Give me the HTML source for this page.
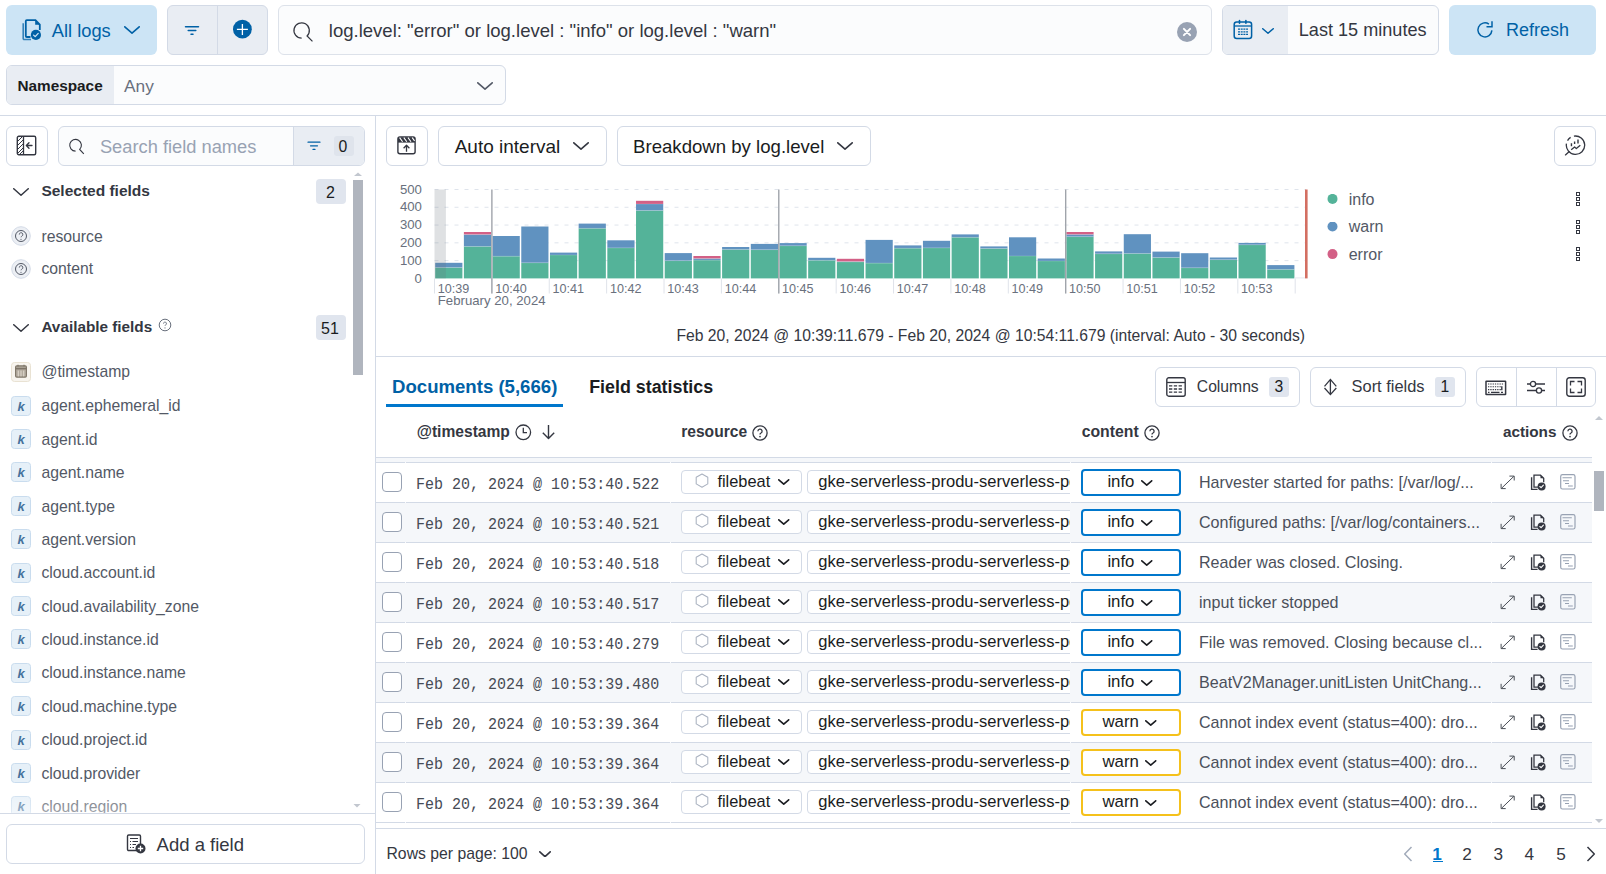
<!DOCTYPE html>
<html><head><meta charset="utf-8">
<style>
*{box-sizing:border-box;margin:0;padding:0}
html,body{width:1606px;height:874px;overflow:hidden;background:#fff;font-family:"Liberation Sans",sans-serif;color:#343741}
.a{position:absolute}
.t{position:absolute;white-space:nowrap;line-height:1}
svg{display:block}
</style></head><body>
<div class="a" style="left:6px;top:5px;width:151px;height:50px;background:#cce4f5;border-radius:6px"></div>
<svg class="a" style="left:20px;top:19px;" width="24" height="22" viewBox="0 0 24 22">
<path d="M3.2 4.2 V19.5 a1 1 0 0 0 1 1 H11" fill="none" stroke="#0061a6" stroke-width="1.6" opacity="0.75"/>
<path d="M10.5 18 H6.8 a1 1 0 0 1 -1 -1 V2.2 a1 1 0 0 1 1 -1 H15.5 L19.8 5.5 V11" fill="none" stroke="#0061a6" stroke-width="1.8"/>
<path d="M15.2 1.5 V5.8 H19.6 Z" fill="#0061a6"/>
<circle cx="15.9" cy="15.9" r="5.1" fill="#0061a6"/>
<path d="M13.6 16.1 L15.2 17.6 L18.2 14.4" fill="none" stroke="#cce4f5" stroke-width="1.3" stroke-linecap="round" stroke-linejoin="round"/>
</svg>
<div class="t" style="left:51.80px;top:22px;font-size:18.3px;color:#0061a6;font-weight:normal;font-family:'Liberation Sans',sans-serif;">All logs</div>
<svg class="a" style="left:124px;top:26px;" width="16" height="8" viewBox="0 0 16 8"><path d="M0.8 0.8 L8.0 7.2 L15.2 0.8" fill="none" stroke="#0061a6" stroke-width="1.6" stroke-linecap="round" stroke-linejoin="round"/></svg>
<div class="a" style="left:167px;top:5px;width:101px;height:50px;background:#e9edf3;border:1px solid #d3dae6;border-radius:6px"></div>
<div class="a" style="left:217px;top:6px;width:1px;height:48px;background:#d3dae6"></div>
<svg class="a" style="left:184px;top:25px;" width="16" height="11" viewBox="0 0 16 11"><path d="M1.5 1.8 H14.5 M4.2 5.5 H11.8 M7 9.3 H9" stroke="#0061a6" stroke-width="1.5" stroke-linecap="round"/></svg>
<svg class="a" style="left:232px;top:19px;" width="21" height="21" viewBox="0 0 21 21"><circle cx="10.4" cy="10.2" r="9.4" fill="#0061a6"/><path d="M10.4 5 V15.9 M4.9 10.4 H15.9" stroke="#fff" stroke-width="1.3"/></svg>
<div class="a" style="left:278px;top:5px;width:934px;height:50px;background:#fbfcfd;border:1px solid #dde2ea;border-radius:6px"></div>
<svg class="a" style="left:291px;top:20px;" width="23" height="23" viewBox="0 0 23 23"><path d="M10.65 18.2 A7.7 7.7 0 1 1 16.09 15.94 L21.45 21.4" fill="none" stroke="#343741" stroke-width="1.25"/></svg>
<div class="t" style="left:328.80px;top:22px;font-size:18.55px;color:#343741;font-weight:normal;font-family:'Liberation Sans',sans-serif;">log.level: "error" or log.level : "info" or log.level : "warn"</div>
<svg class="a" style="left:1177px;top:22px;" width="20" height="20" viewBox="0 0 20 20"><circle cx="10" cy="10" r="10" fill="#98a2b3"/><path d="M6.9 6.9 L13.1 13.1 M13.1 6.9 L6.9 13.1" stroke="#fff" stroke-width="2" stroke-linecap="round"/></svg>
<div class="a" style="left:1222px;top:5px;width:217px;height:50px;background:#fbfcfd;border:1px solid #d3dae6;border-radius:6px;overflow:hidden"><div class="a" style="left:0;top:0;width:65px;height:48px;background:#e9edf3"></div></div>
<svg class="a" style="left:1233px;top:19px;" width="20" height="21" viewBox="0 0 20 21">
<rect x="1.2" y="3" width="17.4" height="16.6" rx="2.5" fill="none" stroke="#0061a6" stroke-width="1.5"/>
<path d="M1.5 7 H18.3" stroke="#0061a6" stroke-width="1.3"/>
<path d="M6.5 1.6 V4.2 M12.9 1.6 V4.2" stroke="#0061a6" stroke-width="1.6" stroke-linecap="round"/>
<path d="M5 10.2 H15 M5 12.8 H15 M5 15.4 H15" stroke="#0061a6" stroke-width="1.2" stroke-dasharray="2 0.7"/>
</svg>
<svg class="a" style="left:1262px;top:28px;" width="12" height="6" viewBox="0 0 12 6"><path d="M0.75 0.75 L6.0 5.25 L11.25 0.75" fill="none" stroke="#0061a6" stroke-width="1.5" stroke-linecap="round" stroke-linejoin="round"/></svg>
<div class="t" style="left:1298.80px;top:21px;font-size:18.1px;color:#343741;font-weight:normal;font-family:'Liberation Sans',sans-serif;">Last 15 minutes</div>
<div class="a" style="left:1449px;top:5px;width:147px;height:50px;background:#cce4f5;border-radius:6px"></div>
<svg class="a" style="left:1476px;top:20px;" width="18" height="19" viewBox="0 0 18 19"><path d="M12.9 4.1 A7 7 0 1 0 15.9 10.4" fill="none" stroke="#0061a6" stroke-width="1.5"/><path d="M16 1.3 V6.7 H10.5" fill="none" stroke="#0061a6" stroke-width="1.5"/></svg>
<div class="t" style="left:1505.90px;top:21px;font-size:18.0px;color:#0061a6;font-weight:normal;font-family:'Liberation Sans',sans-serif;">Refresh</div>
<div class="a" style="left:6px;top:65px;width:500px;height:40px;background:#fbfcfd;border:1px solid #d3dae6;border-radius:6px;overflow:hidden"><div class="a" style="left:0;top:0;width:107px;height:38px;background:#e9edf3"></div></div>
<div class="t" style="left:17.40px;top:78px;font-size:15.35px;color:#1a1c21;font-weight:bold;font-family:'Liberation Sans',sans-serif;">Namespace</div>
<div class="t" style="left:124.00px;top:78px;font-size:17.3px;color:#69707d;font-weight:normal;font-family:'Liberation Sans',sans-serif;">Any</div>
<svg class="a" style="left:477px;top:82px;" width="16" height="8" viewBox="0 0 16 8"><path d="M0.8 0.8 L8.0 7.2 L15.2 0.8" fill="none" stroke="#535966" stroke-width="1.6" stroke-linecap="round" stroke-linejoin="round"/></svg>
<div class="a" style="left:0px;top:115px;width:1606px;height:1px;background:#d3dae6"></div>
<div class="a" style="left:375px;top:116px;width:1px;height:758px;background:#d3dae6"></div>
<div class="a" style="left:376px;top:356px;width:1230px;height:1px;background:#d3dae6"></div>
<div class="a" style="left:6px;top:126px;width:42px;height:40px;background:#fff;border:1px solid #d3dae6;border-radius:6px"></div>
<svg class="a" style="left:16px;top:135px;" width="21" height="21" viewBox="0 0 21 21">
<rect x="1.3" y="1.3" width="18.4" height="18.4" rx="1.5" fill="none" stroke="#343741" stroke-width="1.4"/>
<path d="M7.5 1.5 V19.5" stroke="#343741" stroke-width="1.3"/>
<path d="M2 6 L6 2 M2 10 L7 5 M2 14 L7 9 M2 18 L7 13 M4 19 L7 16" stroke="#343741" stroke-width="1"/>
<path d="M16 10.5 H10.5 M13 7.8 L10.3 10.5 L13 13.2" fill="none" stroke="#343741" stroke-width="1.3" stroke-linecap="round" stroke-linejoin="round"/>
</svg>
<div class="a" style="left:58px;top:126px;width:307px;height:40px;background:#fbfcfd;border:1px solid #d3dae6;border-radius:6px;overflow:hidden"><div class="a" style="left:234px;top:0;width:73px;height:38px;background:#e9edf3;border-left:1px solid #d3dae6"></div></div>
<svg class="a" style="left:66px;top:136px;" width="20" height="20" viewBox="0 0 20 20"><path d="M9.55 15.1 A5.85 5.85 0 1 1 13.69 13.39 L17.8 17.8" fill="none" stroke="#343741" stroke-width="1.1"/></svg>
<div class="t" style="left:99.90px;top:138px;font-size:18.3px;color:#98a2b3;font-weight:normal;font-family:'Liberation Sans',sans-serif;">Search field names</div>
<svg class="a" style="left:307px;top:141px;" width="14" height="10" viewBox="0 0 14 10"><path d="M1 1.2 H13 M3.5 4.8 H10.5 M6 8.4 H8" stroke="#0061a6" stroke-width="1.2" stroke-linecap="round"/></svg>
<div class="a" style="left:334px;top:136px;width:20px;height:20px;background:#dfe4ec;border-radius:3px"></div>
<div class="t" style="left:338.50px;top:139px;font-size:15.8px;color:#1a1c21;font-weight:normal;font-family:'Liberation Sans',sans-serif;">0</div>
<svg class="a" style="left:13px;top:187.5px;" width="16" height="8" viewBox="0 0 16 8"><path d="M0.75 0.75 L8.0 7.25 L15.25 0.75" fill="none" stroke="#343741" stroke-width="1.5" stroke-linecap="round" stroke-linejoin="round"/></svg>
<div class="t" style="left:41.40px;top:183px;font-size:15.5px;color:#343741;font-weight:bold;font-family:'Liberation Sans',sans-serif;">Selected fields</div>
<div class="a" style="left:316px;top:179px;width:30px;height:25px;background:#e0e5ee;border-radius:4px"></div>
<div class="t" style="left:326.00px;top:185px;font-size:16px;color:#1a1c21;font-weight:normal;font-family:'Liberation Sans',sans-serif;">2</div>
<svg class="a" style="left:352px;top:171px;" width="12" height="6" viewBox="0 0 12 6"><path d="M2 5 L6 1.5 L10 5 Z" fill="#c2c7cf"/></svg>
<div class="a" style="left:353px;top:180px;width:10px;height:195px;background:#b0b5be"></div>
<svg class="a" style="left:352px;top:803px;" width="10" height="5" viewBox="0 0 10 5"><path d="M1.5 1 L5 4.5 L8.5 1 Z" fill="#c2c7cf"/></svg>
<svg class="a" style="left:11px;top:226px;" width="20" height="20" viewBox="0 0 20 20"><circle cx="10" cy="10" r="9.3" fill="#eceff4" stroke="#d3dae6" stroke-width="1"/><circle cx="10" cy="10" r="5.5" fill="none" stroke="#535966" stroke-width="1"/><path d="M8.3 8.6 a1.8 1.8 0 1 1 2.6 1.5 c-0.6 0.3 -0.9 0.6 -0.9 1.2" fill="none" stroke="#535966" stroke-width="0.9"/><circle cx="10" cy="13.3" r="0.6" fill="#535966"/></svg>
<div class="t" style="left:41.40px;top:229px;font-size:15.75px;color:#535966;font-weight:normal;font-family:'Liberation Sans',sans-serif;">resource</div>
<svg class="a" style="left:11px;top:259px;" width="20" height="20" viewBox="0 0 20 20"><circle cx="10" cy="10" r="9.3" fill="#eceff4" stroke="#d3dae6" stroke-width="1"/><circle cx="10" cy="10" r="5.5" fill="none" stroke="#535966" stroke-width="1"/><path d="M8.3 8.6 a1.8 1.8 0 1 1 2.6 1.5 c-0.6 0.3 -0.9 0.6 -0.9 1.2" fill="none" stroke="#535966" stroke-width="0.9"/><circle cx="10" cy="13.3" r="0.6" fill="#535966"/></svg>
<div class="t" style="left:41.40px;top:261px;font-size:15.75px;color:#535966;font-weight:normal;font-family:'Liberation Sans',sans-serif;">content</div>
<svg class="a" style="left:13px;top:323.5px;" width="16" height="8" viewBox="0 0 16 8"><path d="M0.75 0.75 L8.0 7.25 L15.25 0.75" fill="none" stroke="#343741" stroke-width="1.5" stroke-linecap="round" stroke-linejoin="round"/></svg>
<div class="t" style="left:41.40px;top:319px;font-size:15.3px;color:#343741;font-weight:bold;font-family:'Liberation Sans',sans-serif;">Available fields</div>
<svg class="a" style="left:158px;top:318px;" width="14" height="14" viewBox="0 0 14 14"><circle cx="7" cy="7" r="5.8" fill="none" stroke="#69707d" stroke-width="1"/><path d="M5.5 5.6 a1.5 1.5 0 1 1 2.2 1.3 c-0.5 0.3 -0.7 0.5 -0.7 1.1" fill="none" stroke="#69707d" stroke-width="0.9"/><circle cx="7" cy="9.9" r="0.55" fill="#69707d"/></svg>
<div class="a" style="left:316px;top:315px;width:30px;height:25px;background:#e0e5ee;border-radius:4px"></div>
<div class="t" style="left:321.00px;top:321px;font-size:16px;color:#1a1c21;font-weight:normal;font-family:'Liberation Sans',sans-serif;">51</div>
<svg class="a" style="left:11px;top:362px;" width="20" height="20" viewBox="0 0 20 20"><rect x="0.5" y="0.5" width="19" height="19" rx="3" fill="#f7f4ee" stroke="#e9e2d3"/>
<rect x="4.6" y="3.9" width="10.8" height="11.2" rx="1.2" fill="#b3ab9f" stroke="#7d7467" stroke-width="1.1"/>
<path d="M4.4 6.6 H15.6" stroke="#7d7467" stroke-width="1.6"/>
<path d="M7.3 8.6 V14.4 M10 8.6 V14.4 M12.7 8.6 V14.4" stroke="#e4ded3" stroke-width="0.9"/>
<path d="M7 2.8 V4.6 M13 2.8 V4.6" stroke="#7d7467" stroke-width="1.1"/></svg>
<div class="t" style="left:41.40px;top:364px;font-size:15.75px;color:#535966;font-weight:normal;font-family:'Liberation Sans',sans-serif;">@timestamp</div>
<svg class="a" style="left:11px;top:396px;" width="20" height="20" viewBox="0 0 20 20"><rect x="0.5" y="0.5" width="19" height="19" rx="3" fill="#e6f0f8" stroke="#c9dcee"/><text x="10" y="14.6" text-anchor="middle" font-family="Liberation Sans" font-weight="bold" font-style="italic" font-size="13" fill="#44709c">k</text></svg>
<div class="t" style="left:41.40px;top:398px;font-size:15.75px;color:#535966;font-weight:normal;font-family:'Liberation Sans',sans-serif;">agent.ephemeral_id</div>
<svg class="a" style="left:11px;top:429px;" width="20" height="20" viewBox="0 0 20 20"><rect x="0.5" y="0.5" width="19" height="19" rx="3" fill="#e6f0f8" stroke="#c9dcee"/><text x="10" y="14.6" text-anchor="middle" font-family="Liberation Sans" font-weight="bold" font-style="italic" font-size="13" fill="#44709c">k</text></svg>
<div class="t" style="left:41.40px;top:432px;font-size:15.75px;color:#535966;font-weight:normal;font-family:'Liberation Sans',sans-serif;">agent.id</div>
<svg class="a" style="left:11px;top:462px;" width="20" height="20" viewBox="0 0 20 20"><rect x="0.5" y="0.5" width="19" height="19" rx="3" fill="#e6f0f8" stroke="#c9dcee"/><text x="10" y="14.6" text-anchor="middle" font-family="Liberation Sans" font-weight="bold" font-style="italic" font-size="13" fill="#44709c">k</text></svg>
<div class="t" style="left:41.40px;top:465px;font-size:15.75px;color:#535966;font-weight:normal;font-family:'Liberation Sans',sans-serif;">agent.name</div>
<svg class="a" style="left:11px;top:496px;" width="20" height="20" viewBox="0 0 20 20"><rect x="0.5" y="0.5" width="19" height="19" rx="3" fill="#e6f0f8" stroke="#c9dcee"/><text x="10" y="14.6" text-anchor="middle" font-family="Liberation Sans" font-weight="bold" font-style="italic" font-size="13" fill="#44709c">k</text></svg>
<div class="t" style="left:41.40px;top:499px;font-size:15.75px;color:#535966;font-weight:normal;font-family:'Liberation Sans',sans-serif;">agent.type</div>
<svg class="a" style="left:11px;top:529px;" width="20" height="20" viewBox="0 0 20 20"><rect x="0.5" y="0.5" width="19" height="19" rx="3" fill="#e6f0f8" stroke="#c9dcee"/><text x="10" y="14.6" text-anchor="middle" font-family="Liberation Sans" font-weight="bold" font-style="italic" font-size="13" fill="#44709c">k</text></svg>
<div class="t" style="left:41.40px;top:532px;font-size:15.75px;color:#535966;font-weight:normal;font-family:'Liberation Sans',sans-serif;">agent.version</div>
<svg class="a" style="left:11px;top:563px;" width="20" height="20" viewBox="0 0 20 20"><rect x="0.5" y="0.5" width="19" height="19" rx="3" fill="#e6f0f8" stroke="#c9dcee"/><text x="10" y="14.6" text-anchor="middle" font-family="Liberation Sans" font-weight="bold" font-style="italic" font-size="13" fill="#44709c">k</text></svg>
<div class="t" style="left:41.40px;top:565px;font-size:15.75px;color:#535966;font-weight:normal;font-family:'Liberation Sans',sans-serif;">cloud.account.id</div>
<svg class="a" style="left:11px;top:596px;" width="20" height="20" viewBox="0 0 20 20"><rect x="0.5" y="0.5" width="19" height="19" rx="3" fill="#e6f0f8" stroke="#c9dcee"/><text x="10" y="14.6" text-anchor="middle" font-family="Liberation Sans" font-weight="bold" font-style="italic" font-size="13" fill="#44709c">k</text></svg>
<div class="t" style="left:41.40px;top:599px;font-size:15.75px;color:#535966;font-weight:normal;font-family:'Liberation Sans',sans-serif;">cloud.availability_zone</div>
<svg class="a" style="left:11px;top:629px;" width="20" height="20" viewBox="0 0 20 20"><rect x="0.5" y="0.5" width="19" height="19" rx="3" fill="#e6f0f8" stroke="#c9dcee"/><text x="10" y="14.6" text-anchor="middle" font-family="Liberation Sans" font-weight="bold" font-style="italic" font-size="13" fill="#44709c">k</text></svg>
<div class="t" style="left:41.40px;top:632px;font-size:15.75px;color:#535966;font-weight:normal;font-family:'Liberation Sans',sans-serif;">cloud.instance.id</div>
<svg class="a" style="left:11px;top:663px;" width="20" height="20" viewBox="0 0 20 20"><rect x="0.5" y="0.5" width="19" height="19" rx="3" fill="#e6f0f8" stroke="#c9dcee"/><text x="10" y="14.6" text-anchor="middle" font-family="Liberation Sans" font-weight="bold" font-style="italic" font-size="13" fill="#44709c">k</text></svg>
<div class="t" style="left:41.40px;top:665px;font-size:15.75px;color:#535966;font-weight:normal;font-family:'Liberation Sans',sans-serif;">cloud.instance.name</div>
<svg class="a" style="left:11px;top:696px;" width="20" height="20" viewBox="0 0 20 20"><rect x="0.5" y="0.5" width="19" height="19" rx="3" fill="#e6f0f8" stroke="#c9dcee"/><text x="10" y="14.6" text-anchor="middle" font-family="Liberation Sans" font-weight="bold" font-style="italic" font-size="13" fill="#44709c">k</text></svg>
<div class="t" style="left:41.40px;top:699px;font-size:15.75px;color:#535966;font-weight:normal;font-family:'Liberation Sans',sans-serif;">cloud.machine.type</div>
<svg class="a" style="left:11px;top:730px;" width="20" height="20" viewBox="0 0 20 20"><rect x="0.5" y="0.5" width="19" height="19" rx="3" fill="#e6f0f8" stroke="#c9dcee"/><text x="10" y="14.6" text-anchor="middle" font-family="Liberation Sans" font-weight="bold" font-style="italic" font-size="13" fill="#44709c">k</text></svg>
<div class="t" style="left:41.40px;top:732px;font-size:15.75px;color:#535966;font-weight:normal;font-family:'Liberation Sans',sans-serif;">cloud.project.id</div>
<svg class="a" style="left:11px;top:763px;" width="20" height="20" viewBox="0 0 20 20"><rect x="0.5" y="0.5" width="19" height="19" rx="3" fill="#e6f0f8" stroke="#c9dcee"/><text x="10" y="14.6" text-anchor="middle" font-family="Liberation Sans" font-weight="bold" font-style="italic" font-size="13" fill="#44709c">k</text></svg>
<div class="t" style="left:41.40px;top:766px;font-size:15.75px;color:#535966;font-weight:normal;font-family:'Liberation Sans',sans-serif;">cloud.provider</div>
<svg class="a" style="left:11px;top:796px;" width="20" height="20" viewBox="0 0 20 20"><rect x="0.5" y="0.5" width="19" height="19" rx="3" fill="#e6f0f8" stroke="#c9dcee"/><text x="10" y="14.6" text-anchor="middle" font-family="Liberation Sans" font-weight="bold" font-style="italic" font-size="13" fill="#44709c">k</text></svg>
<div class="t" style="left:41.40px;top:799px;font-size:15.75px;color:#535966;font-weight:normal;font-family:'Liberation Sans',sans-serif;">cloud.region</div>
<div class="a" style="left:0px;top:783px;width:352px;height:30px;background:linear-gradient(to bottom, rgba(255,255,255,0), rgba(255,255,255,0.45))"></div>
<div class="a" style="left:0px;top:813px;width:375px;height:61px;background:#fff"></div>
<div class="a" style="left:0px;top:813px;width:375px;height:1px;background:#d3dae6"></div>
<div class="a" style="left:6px;top:824px;width:359px;height:40px;background:#fff;border:1px solid #d3dae6;border-radius:6px"></div>
<svg class="a" style="left:126px;top:834px;" width="20" height="20" viewBox="0 0 20 20"><rect x="1.5" y="1" width="13" height="15.5" rx="1.2" fill="none" stroke="#343741" stroke-width="1.4"/>
<path d="M4 4.5 H12 M4 7.5 H5 M6.5 7.5 H12 M4 10.5 H5 M6.5 10.5 H10 M4 13.5 H5 M6.5 13.5 H8" stroke="#343741" stroke-width="1.1"/>
<circle cx="14.5" cy="14.5" r="5" fill="#343741"/>
<path d="M14.5 11.8 V17.2 M11.8 14.5 H17.2" stroke="#fff" stroke-width="1.3"/></svg>
<div class="t" style="left:156.60px;top:836px;font-size:18.5px;color:#343741;font-weight:normal;font-family:'Liberation Sans',sans-serif;">Add a field</div>
<div class="a" style="left:386px;top:126px;width:42px;height:40px;background:#fff;border:1px solid #d3dae6;border-radius:6px"></div>
<svg class="a" style="left:396px;top:135px;" width="21" height="21" viewBox="0 0 21 21"><rect x="1.9" y="1.9" width="17.2" height="16.8" rx="2" fill="none" stroke="#343741" stroke-width="1.4"/>
<path d="M2 2.2 H19 V7.6 H2 Z" fill="#343741"/>
<path d="M3.6 2.6 L6.6 6.8 M7.8 2.6 L10.8 6.8 M12 2.6 L15 6.8 M16.2 2.6 L18.6 5.8" stroke="#fff" stroke-width="1.1"/>
<path d="M10.5 16.7 V10.4 M7.6 13.2 L10.5 10.3 L13.4 13.2" fill="none" stroke="#343741" stroke-width="1.3" stroke-linejoin="round"/></svg>
<div class="a" style="left:438px;top:126px;width:169px;height:40px;background:#fff;border:1px solid #d3dae6;border-radius:6px"></div>
<div class="t" style="left:454.70px;top:137px;font-size:19.0px;color:#1a1c21;font-weight:normal;font-family:'Liberation Sans',sans-serif;">Auto interval</div>
<svg class="a" style="left:573px;top:142px;" width="16" height="8" viewBox="0 0 16 8"><path d="M0.8 0.8 L8.0 7.2 L15.2 0.8" fill="none" stroke="#343741" stroke-width="1.6" stroke-linecap="round" stroke-linejoin="round"/></svg>
<div class="a" style="left:617px;top:126px;width:254px;height:40px;background:#fff;border:1px solid #d3dae6;border-radius:6px"></div>
<div class="t" style="left:633.10px;top:138px;font-size:18.6px;color:#1a1c21;font-weight:normal;font-family:'Liberation Sans',sans-serif;">Breakdown by log.level</div>
<svg class="a" style="left:837px;top:142px;" width="16" height="8" viewBox="0 0 16 8"><path d="M0.8 0.8 L8.0 7.2 L15.2 0.8" fill="none" stroke="#343741" stroke-width="1.6" stroke-linecap="round" stroke-linejoin="round"/></svg>
<div class="a" style="left:1554px;top:126px;width:42px;height:40px;background:#fff;border:1px solid #d3dae6;border-radius:6px"></div>
<svg class="a" style="left:1564px;top:135px;" width="22" height="22" viewBox="0 0 22 22"><path d="M9.9 1.14 A9.2 9.2 0 1 1 2.44 8.6" fill="none" stroke="#343741" stroke-width="1.3"/>
<path d="M3.53 5.6 A9.2 9.2 0 0 1 6.62 2.4" fill="none" stroke="#343741" stroke-width="1.3"/>
<path d="M5 16.7 L1.45 19.9" stroke="#343741" stroke-width="1.3" stroke-linecap="round"/>
<path d="M7.45 8.2 V11.3 M10.6 6.45 V9 M14 4.45 V8.45" stroke="#343741" stroke-width="1.4"/>
<path d="M7.2 14.7 L10.6 11.9 L12.3 13.6 L16.3 10.2" fill="none" stroke="#343741" stroke-width="1.3" stroke-linejoin="round"/></svg>
<svg class="a" style="left:376px;top:170px;" width="1230" height="186" viewBox="0 0 1230 186"><path d="M58.5 90.62 H930" stroke="#dfe4ec" stroke-width="1" stroke-dasharray="4 6"/><path d="M58.5 72.84 H930" stroke="#dfe4ec" stroke-width="1" stroke-dasharray="4 6"/><path d="M58.5 55.06 H930" stroke="#dfe4ec" stroke-width="1" stroke-dasharray="4 6"/><path d="M58.5 37.28 H930" stroke="#dfe4ec" stroke-width="1" stroke-dasharray="4 6"/><path d="M58.5 19.50 H930" stroke="#dfe4ec" stroke-width="1" stroke-dasharray="4 6"/><rect x="59.20" y="97.50" width="27.2" height="10.90" fill="#54b399"/><rect x="59.20" y="92.80" width="27.2" height="4.70" fill="#6092c0"/><rect x="59.20" y="97.10" width="27.2" height="0.8" fill="#fff" opacity="0.22"/><rect x="87.89" y="76.40" width="27.2" height="32.00" fill="#54b399"/><rect x="87.89" y="64.50" width="27.2" height="11.90" fill="#6092c0"/><rect x="87.89" y="76.00" width="27.2" height="0.8" fill="#fff" opacity="0.22"/><rect x="87.89" y="62.00" width="27.2" height="2.50" fill="#d36086"/><rect x="87.89" y="64.10" width="27.2" height="0.8" fill="#fff" opacity="0.22"/><rect x="116.58" y="86.20" width="27.2" height="22.20" fill="#54b399"/><rect x="116.58" y="66.00" width="27.2" height="20.20" fill="#6092c0"/><rect x="116.58" y="85.80" width="27.2" height="0.8" fill="#fff" opacity="0.22"/><rect x="145.27" y="92.80" width="27.2" height="15.60" fill="#54b399"/><rect x="145.27" y="56.50" width="27.2" height="36.30" fill="#6092c0"/><rect x="145.27" y="92.40" width="27.2" height="0.8" fill="#fff" opacity="0.22"/><rect x="173.96" y="85.00" width="27.2" height="23.40" fill="#54b399"/><rect x="173.96" y="82.60" width="27.2" height="2.40" fill="#6092c0"/><rect x="173.96" y="84.60" width="27.2" height="0.8" fill="#fff" opacity="0.22"/><rect x="202.65" y="58.30" width="27.2" height="50.10" fill="#54b399"/><rect x="202.65" y="53.60" width="27.2" height="4.70" fill="#6092c0"/><rect x="202.65" y="57.90" width="27.2" height="0.8" fill="#fff" opacity="0.22"/><rect x="231.34" y="77.90" width="27.2" height="30.50" fill="#54b399"/><rect x="231.34" y="70.30" width="27.2" height="7.60" fill="#6092c0"/><rect x="231.34" y="77.50" width="27.2" height="0.8" fill="#fff" opacity="0.22"/><rect x="260.03" y="40.50" width="27.2" height="67.90" fill="#54b399"/><rect x="260.03" y="34.00" width="27.2" height="6.50" fill="#6092c0"/><rect x="260.03" y="40.10" width="27.2" height="0.8" fill="#fff" opacity="0.22"/><rect x="260.03" y="30.80" width="27.2" height="3.20" fill="#d36086"/><rect x="260.03" y="33.60" width="27.2" height="0.8" fill="#fff" opacity="0.22"/><rect x="288.72" y="90.70" width="27.2" height="17.70" fill="#54b399"/><rect x="288.72" y="83.10" width="27.2" height="7.60" fill="#6092c0"/><rect x="288.72" y="90.30" width="27.2" height="0.8" fill="#fff" opacity="0.22"/><rect x="317.41" y="90.10" width="27.2" height="18.30" fill="#54b399"/><rect x="317.41" y="88.50" width="27.2" height="1.60" fill="#6092c0"/><rect x="317.41" y="89.70" width="27.2" height="0.8" fill="#fff" opacity="0.22"/><rect x="317.41" y="86.00" width="27.2" height="2.50" fill="#d36086"/><rect x="317.41" y="88.10" width="27.2" height="0.8" fill="#fff" opacity="0.22"/><rect x="346.10" y="79.50" width="27.2" height="28.90" fill="#54b399"/><rect x="346.10" y="77.00" width="27.2" height="2.50" fill="#6092c0"/><rect x="346.10" y="79.10" width="27.2" height="0.8" fill="#fff" opacity="0.22"/><rect x="374.79" y="79.70" width="27.2" height="28.70" fill="#54b399"/><rect x="374.79" y="73.90" width="27.2" height="5.80" fill="#6092c0"/><rect x="374.79" y="79.30" width="27.2" height="0.8" fill="#fff" opacity="0.22"/><rect x="403.48" y="75.80" width="27.2" height="32.60" fill="#54b399"/><rect x="403.48" y="73.10" width="27.2" height="2.70" fill="#6092c0"/><rect x="403.48" y="75.40" width="27.2" height="0.8" fill="#fff" opacity="0.22"/><rect x="432.17" y="90.30" width="27.2" height="18.10" fill="#54b399"/><rect x="432.17" y="87.80" width="27.2" height="2.50" fill="#6092c0"/><rect x="432.17" y="89.90" width="27.2" height="0.8" fill="#fff" opacity="0.22"/><rect x="460.86" y="91.90" width="27.2" height="16.50" fill="#54b399"/><rect x="460.86" y="91.50" width="27.2" height="0.40" fill="#6092c0"/><rect x="460.86" y="91.50" width="27.2" height="0.8" fill="#fff" opacity="0.22"/><rect x="460.86" y="88.80" width="27.2" height="2.70" fill="#d36086"/><rect x="460.86" y="91.10" width="27.2" height="0.8" fill="#fff" opacity="0.22"/><rect x="489.55" y="93.10" width="27.2" height="15.30" fill="#54b399"/><rect x="489.55" y="69.90" width="27.2" height="23.20" fill="#6092c0"/><rect x="489.55" y="92.70" width="27.2" height="0.8" fill="#fff" opacity="0.22"/><rect x="518.24" y="78.20" width="27.2" height="30.20" fill="#54b399"/><rect x="518.24" y="75.40" width="27.2" height="2.80" fill="#6092c0"/><rect x="518.24" y="77.80" width="27.2" height="0.8" fill="#fff" opacity="0.22"/><rect x="546.93" y="77.90" width="27.2" height="30.50" fill="#54b399"/><rect x="546.93" y="70.80" width="27.2" height="7.10" fill="#6092c0"/><rect x="546.93" y="77.50" width="27.2" height="0.8" fill="#fff" opacity="0.22"/><rect x="575.62" y="67.30" width="27.2" height="41.10" fill="#54b399"/><rect x="575.62" y="64.40" width="27.2" height="2.90" fill="#6092c0"/><rect x="575.62" y="66.90" width="27.2" height="0.8" fill="#fff" opacity="0.22"/><rect x="604.31" y="78.50" width="27.2" height="29.90" fill="#54b399"/><rect x="604.31" y="76.40" width="27.2" height="2.10" fill="#6092c0"/><rect x="604.31" y="78.10" width="27.2" height="0.8" fill="#fff" opacity="0.22"/><rect x="633.00" y="86.00" width="27.2" height="22.40" fill="#54b399"/><rect x="633.00" y="67.30" width="27.2" height="18.70" fill="#6092c0"/><rect x="633.00" y="85.60" width="27.2" height="0.8" fill="#fff" opacity="0.22"/><rect x="661.69" y="91.00" width="27.2" height="17.40" fill="#54b399"/><rect x="661.69" y="88.50" width="27.2" height="2.50" fill="#6092c0"/><rect x="661.69" y="90.60" width="27.2" height="0.8" fill="#fff" opacity="0.22"/><rect x="690.38" y="66.70" width="27.2" height="41.70" fill="#54b399"/><rect x="690.38" y="64.40" width="27.2" height="2.30" fill="#6092c0"/><rect x="690.38" y="66.30" width="27.2" height="0.8" fill="#fff" opacity="0.22"/><rect x="690.38" y="62.00" width="27.2" height="2.40" fill="#d36086"/><rect x="690.38" y="64.00" width="27.2" height="0.8" fill="#fff" opacity="0.22"/><rect x="719.07" y="83.80" width="27.2" height="24.60" fill="#54b399"/><rect x="719.07" y="81.40" width="27.2" height="2.40" fill="#6092c0"/><rect x="719.07" y="83.40" width="27.2" height="0.8" fill="#fff" opacity="0.22"/><rect x="747.76" y="83.50" width="27.2" height="24.90" fill="#54b399"/><rect x="747.76" y="64.20" width="27.2" height="19.30" fill="#6092c0"/><rect x="747.76" y="83.10" width="27.2" height="0.8" fill="#fff" opacity="0.22"/><rect x="776.45" y="87.50" width="27.2" height="20.90" fill="#54b399"/><rect x="776.45" y="81.60" width="27.2" height="5.90" fill="#6092c0"/><rect x="776.45" y="87.10" width="27.2" height="0.8" fill="#fff" opacity="0.22"/><rect x="805.14" y="97.80" width="27.2" height="10.60" fill="#54b399"/><rect x="805.14" y="83.20" width="27.2" height="14.60" fill="#6092c0"/><rect x="805.14" y="97.40" width="27.2" height="0.8" fill="#fff" opacity="0.22"/><rect x="833.83" y="89.70" width="27.2" height="18.70" fill="#54b399"/><rect x="833.83" y="87.50" width="27.2" height="2.20" fill="#6092c0"/><rect x="833.83" y="89.30" width="27.2" height="0.8" fill="#fff" opacity="0.22"/><rect x="862.52" y="74.80" width="27.2" height="33.60" fill="#54b399"/><rect x="862.52" y="72.90" width="27.2" height="1.90" fill="#6092c0"/><rect x="862.52" y="74.40" width="27.2" height="0.8" fill="#fff" opacity="0.22"/><rect x="891.21" y="99.40" width="27.2" height="9.00" fill="#54b399"/><rect x="891.21" y="95.10" width="27.2" height="4.30" fill="#6092c0"/><rect x="891.21" y="99.00" width="27.2" height="0.8" fill="#fff" opacity="0.22"/><rect x="58.5" y="19.5" width="11.4" height="88.89999999999998" fill="#69707d" opacity="0.21"/><path d="M58.50 108.39999999999998 V123.5" stroke="#dfe3ea" stroke-width="1"/><path d="M115.88 108.39999999999998 V123.5" stroke="#dfe3ea" stroke-width="1"/><path d="M173.26 108.39999999999998 V123.5" stroke="#dfe3ea" stroke-width="1"/><path d="M230.64 108.39999999999998 V123.5" stroke="#dfe3ea" stroke-width="1"/><path d="M288.02 108.39999999999998 V123.5" stroke="#dfe3ea" stroke-width="1"/><path d="M345.40 108.39999999999998 V123.5" stroke="#dfe3ea" stroke-width="1"/><path d="M402.78 108.39999999999998 V123.5" stroke="#dfe3ea" stroke-width="1"/><path d="M460.16 108.39999999999998 V123.5" stroke="#dfe3ea" stroke-width="1"/><path d="M517.54 108.39999999999998 V123.5" stroke="#dfe3ea" stroke-width="1"/><path d="M574.92 108.39999999999998 V123.5" stroke="#dfe3ea" stroke-width="1"/><path d="M632.30 108.39999999999998 V123.5" stroke="#dfe3ea" stroke-width="1"/><path d="M689.68 108.39999999999998 V123.5" stroke="#dfe3ea" stroke-width="1"/><path d="M747.06 108.39999999999998 V123.5" stroke="#dfe3ea" stroke-width="1"/><path d="M804.44 108.39999999999998 V123.5" stroke="#dfe3ea" stroke-width="1"/><path d="M861.82 108.39999999999998 V123.5" stroke="#dfe3ea" stroke-width="1"/><path d="M919.20 108.39999999999998 V123.5" stroke="#dfe3ea" stroke-width="1"/><path d="M115.88 19.5 V123.5" stroke="#a0a4ab" stroke-width="1.4"/><path d="M402.78 19.5 V123.5" stroke="#a0a4ab" stroke-width="1.4"/><path d="M689.68 19.5 V123.5" stroke="#a0a4ab" stroke-width="1.4"/><path d="M918.5999999999999 107.89999999999998 H929" stroke="#e6e9ee" stroke-width="1"/><rect x="929" y="19.5" width="2.6" height="88.89999999999998" fill="#d36f62"/></svg>
<div class="t" style="left:399.88px;top:183px;font-size:13.2px;color:#69707d;font-weight:normal;font-family:'Liberation Sans',sans-serif;">500</div>
<div class="t" style="left:399.88px;top:200px;font-size:13.2px;color:#69707d;font-weight:normal;font-family:'Liberation Sans',sans-serif;">400</div>
<div class="t" style="left:399.88px;top:218px;font-size:13.2px;color:#69707d;font-weight:normal;font-family:'Liberation Sans',sans-serif;">300</div>
<div class="t" style="left:399.88px;top:236px;font-size:13.2px;color:#69707d;font-weight:normal;font-family:'Liberation Sans',sans-serif;">200</div>
<div class="t" style="left:399.88px;top:254px;font-size:13.2px;color:#69707d;font-weight:normal;font-family:'Liberation Sans',sans-serif;">100</div>
<div class="t" style="left:414.56px;top:272px;font-size:13.2px;color:#69707d;font-weight:normal;font-family:'Liberation Sans',sans-serif;">0</div>
<div class="t" style="left:437.80px;top:283px;font-size:12.6px;color:#69707d;font-weight:normal;font-family:'Liberation Sans',sans-serif;">10:39</div>
<div class="t" style="left:495.18px;top:283px;font-size:12.6px;color:#69707d;font-weight:normal;font-family:'Liberation Sans',sans-serif;">10:40</div>
<div class="t" style="left:552.56px;top:283px;font-size:12.6px;color:#69707d;font-weight:normal;font-family:'Liberation Sans',sans-serif;">10:41</div>
<div class="t" style="left:609.94px;top:283px;font-size:12.6px;color:#69707d;font-weight:normal;font-family:'Liberation Sans',sans-serif;">10:42</div>
<div class="t" style="left:667.32px;top:283px;font-size:12.6px;color:#69707d;font-weight:normal;font-family:'Liberation Sans',sans-serif;">10:43</div>
<div class="t" style="left:724.70px;top:283px;font-size:12.6px;color:#69707d;font-weight:normal;font-family:'Liberation Sans',sans-serif;">10:44</div>
<div class="t" style="left:782.08px;top:283px;font-size:12.6px;color:#69707d;font-weight:normal;font-family:'Liberation Sans',sans-serif;">10:45</div>
<div class="t" style="left:839.46px;top:283px;font-size:12.6px;color:#69707d;font-weight:normal;font-family:'Liberation Sans',sans-serif;">10:46</div>
<div class="t" style="left:896.84px;top:283px;font-size:12.6px;color:#69707d;font-weight:normal;font-family:'Liberation Sans',sans-serif;">10:47</div>
<div class="t" style="left:954.22px;top:283px;font-size:12.6px;color:#69707d;font-weight:normal;font-family:'Liberation Sans',sans-serif;">10:48</div>
<div class="t" style="left:1011.60px;top:283px;font-size:12.6px;color:#69707d;font-weight:normal;font-family:'Liberation Sans',sans-serif;">10:49</div>
<div class="t" style="left:1068.98px;top:283px;font-size:12.6px;color:#69707d;font-weight:normal;font-family:'Liberation Sans',sans-serif;">10:50</div>
<div class="t" style="left:1126.36px;top:283px;font-size:12.6px;color:#69707d;font-weight:normal;font-family:'Liberation Sans',sans-serif;">10:51</div>
<div class="t" style="left:1183.74px;top:283px;font-size:12.6px;color:#69707d;font-weight:normal;font-family:'Liberation Sans',sans-serif;">10:52</div>
<div class="t" style="left:1241.12px;top:283px;font-size:12.6px;color:#69707d;font-weight:normal;font-family:'Liberation Sans',sans-serif;">10:53</div>
<div class="t" style="left:437.80px;top:294px;font-size:13.2px;color:#69707d;font-weight:normal;font-family:'Liberation Sans',sans-serif;">February 20, 2024</div>
<svg class="a" style="left:1327px;top:194px;" width="11" height="11" viewBox="0 0 11 11"><circle cx="5.5" cy="4.90" r="5" fill="#54b399"/></svg>
<div class="t" style="left:1348.70px;top:192px;font-size:16px;color:#535966;font-weight:normal;font-family:'Liberation Sans',sans-serif;">info</div>
<svg class="a" style="left:1575px;top:191px;" width="7" height="16" viewBox="0 0 7 16"><rect x="1.5" y="1.5" width="3" height="3" fill="none" stroke="#343741" stroke-width="1"/><rect x="1.5" y="6.5" width="3" height="3" fill="none" stroke="#343741" stroke-width="1"/><rect x="1.5" y="11.5" width="3" height="3" fill="none" stroke="#343741" stroke-width="1"/></svg>
<svg class="a" style="left:1327px;top:222px;" width="11" height="11" viewBox="0 0 11 11"><circle cx="5.5" cy="4.50" r="5" fill="#6092c0"/></svg>
<div class="t" style="left:1348.70px;top:219px;font-size:16px;color:#535966;font-weight:normal;font-family:'Liberation Sans',sans-serif;">warn</div>
<svg class="a" style="left:1575px;top:219px;" width="7" height="16" viewBox="0 0 7 16"><rect x="1.5" y="1.5" width="3" height="3" fill="none" stroke="#343741" stroke-width="1"/><rect x="1.5" y="6.5" width="3" height="3" fill="none" stroke="#343741" stroke-width="1"/><rect x="1.5" y="11.5" width="3" height="3" fill="none" stroke="#343741" stroke-width="1"/></svg>
<svg class="a" style="left:1327px;top:249px;" width="11" height="11" viewBox="0 0 11 11"><circle cx="5.5" cy="5.10" r="5" fill="#d36086"/></svg>
<div class="t" style="left:1348.70px;top:247px;font-size:16px;color:#535966;font-weight:normal;font-family:'Liberation Sans',sans-serif;">error</div>
<svg class="a" style="left:1575px;top:246px;" width="7" height="16" viewBox="0 0 7 16"><rect x="1.5" y="1.5" width="3" height="3" fill="none" stroke="#343741" stroke-width="1"/><rect x="1.5" y="6.5" width="3" height="3" fill="none" stroke="#343741" stroke-width="1"/><rect x="1.5" y="11.5" width="3" height="3" fill="none" stroke="#343741" stroke-width="1"/></svg>
<div class="t" style="left:676.40px;top:328px;font-size:15.7px;color:#343741;font-weight:normal;font-family:'Liberation Sans',sans-serif;">Feb 20, 2024 @ 10:39:11.679 - Feb 20, 2024 @ 10:54:11.679 (interval: Auto - 30 seconds)</div>
<div class="t" style="left:392.00px;top:378px;font-size:18.6px;color:#0061a6;font-weight:bold;font-family:'Liberation Sans',sans-serif;">Documents (5,666)</div>
<div class="a" style="left:386px;top:404px;width:177px;height:3px;background:#0077cc"></div>
<div class="t" style="left:589.20px;top:379px;font-size:17.85px;color:#1a1c21;font-weight:bold;font-family:'Liberation Sans',sans-serif;">Field statistics</div>
<div class="a" style="left:1155px;top:367px;width:145px;height:40px;background:#fff;border:1px solid #d3dae6;border-radius:6px"></div>
<svg class="a" style="left:1166px;top:377px;" width="20" height="20" viewBox="0 0 20 20"><rect x="0.8" y="0.8" width="18.4" height="18.4" rx="2" fill="none" stroke="#343741" stroke-width="1.4"/>
<path d="M1 5.5 H19" stroke="#343741" stroke-width="1.3"/>
<path d="M3 8.8 H17 M3 12 H17 M3 15.2 H17" stroke="#343741" stroke-width="1.3" stroke-dasharray="3.3 1.5"/></svg>
<div class="t" style="left:1196.80px;top:379px;font-size:15.7px;color:#343741;font-weight:normal;font-family:'Liberation Sans',sans-serif;">Columns</div>
<div class="a" style="left:1269px;top:377px;width:20px;height:20px;background:#e0e5ee;border-radius:3px"></div>
<div class="t" style="left:1274.50px;top:379px;font-size:15.7px;color:#1a1c21;font-weight:normal;font-family:'Liberation Sans',sans-serif;">3</div>
<div class="a" style="left:1310px;top:367px;width:156px;height:40px;background:#fff;border:1px solid #d3dae6;border-radius:6px"></div>
<svg class="a" style="left:1323px;top:376px;" width="15" height="22" viewBox="0 0 15 22"><path d="M7.4 3.6 V18.2 M1.5 10.4 L7.4 3.4 L13.3 10.4 M1.5 12 L7.4 18.6 L13.3 12" fill="none" stroke="#343741" stroke-width="1.3" stroke-linejoin="miter"/></svg>
<div class="t" style="left:1351.60px;top:378px;font-size:16.4px;color:#343741;font-weight:normal;font-family:'Liberation Sans',sans-serif;">Sort fields</div>
<div class="a" style="left:1435px;top:377px;width:20px;height:20px;background:#e0e5ee;border-radius:3px"></div>
<div class="t" style="left:1440.50px;top:379px;font-size:15.7px;color:#1a1c21;font-weight:normal;font-family:'Liberation Sans',sans-serif;">1</div>
<div class="a" style="left:1476px;top:367px;width:120px;height:40px;background:#fff;border:1px solid #d3dae6;border-radius:6px"></div>
<div class="a" style="left:1516px;top:368px;width:1px;height:38px;background:#d3dae6"></div>
<div class="a" style="left:1556px;top:368px;width:1px;height:38px;background:#d3dae6"></div>
<svg class="a" style="left:1485px;top:380px;" width="22" height="16" viewBox="0 0 22 16"><rect x="1" y="1.2" width="19.6" height="13.4" rx="0.4" fill="none" stroke="#343741" stroke-width="1.5"/>
<path d="M3 4 H18.5 M3 6.8 H16 M3 9.6 H16" stroke="#343741" stroke-width="1.1" stroke-dasharray="1.3 1"/>
<path d="M16.8 6.2 V10.2" stroke="#343741" stroke-width="1.4"/>
<path d="M6 12.4 H14.5 M3 12.4 H4.5 M16 12.4 H18" stroke="#343741" stroke-width="1.1"/></svg>
<svg class="a" style="left:1526px;top:378px;" width="20" height="18" viewBox="0 0 20 18"><path d="M1 6 H19 M1 12.5 H19" stroke="#343741" stroke-width="1.3"/>
<circle cx="7" cy="6" r="2.6" fill="#fff" stroke="#343741" stroke-width="1.3"/>
<circle cx="13" cy="12.5" r="2.6" fill="#fff" stroke="#343741" stroke-width="1.3"/></svg>
<svg class="a" style="left:1566px;top:377px;" width="20" height="20" viewBox="0 0 20 20"><rect x="0.8" y="0.8" width="18.4" height="18.4" rx="2.5" fill="none" stroke="#343741" stroke-width="1.4"/>
<path d="M4.5 8.5 V4.5 H8.5 M11.5 4.5 H15.5 V8.5 M15.5 11.5 V15.5 H11.5 M8.5 15.5 H4.5 V11.5" fill="none" stroke="#343741" stroke-width="1.3"/></svg>
<div class="t" style="left:416.70px;top:424px;font-size:15.6px;color:#343741;font-weight:bold;font-family:'Liberation Sans',sans-serif;">@timestamp</div>
<svg class="a" style="left:515px;top:424px;" width="17" height="17" viewBox="0 0 17 17"><circle cx="8.3" cy="8.3" r="7.3" fill="none" stroke="#343741" stroke-width="1.3"/><path d="M8.3 3.8 V8.6 H12" fill="none" stroke="#343741" stroke-width="1.3"/></svg>
<svg class="a" style="left:541px;top:424px;" width="15" height="16" viewBox="0 0 15 16"><path d="M7.5 1 V14.5 M1.8 8.8 L7.5 14.5 L13.2 8.8" fill="none" stroke="#343741" stroke-width="1.4" stroke-linejoin="round"/></svg>
<div class="t" style="left:681.20px;top:424px;font-size:15.6px;color:#343741;font-weight:bold;font-family:'Liberation Sans',sans-serif;">resource</div>
<svg class="a" style="left:752px;top:425px;" width="16" height="16" viewBox="0 0 16 16"><circle cx="8" cy="8" r="7.1" fill="none" stroke="#343741" stroke-width="1.3"/><path d="M5.9 6.2 a2.1 2.1 0 1 1 3.1 1.8 c-0.7 0.35 -1 0.75 -1 1.5" fill="none" stroke="#343741" stroke-width="1.3"/><circle cx="8" cy="11.6" r="0.85" fill="#343741"/></svg>
<div class="t" style="left:1081.70px;top:424px;font-size:15.8px;color:#343741;font-weight:bold;font-family:'Liberation Sans',sans-serif;">content</div>
<svg class="a" style="left:1144px;top:425px;" width="16" height="16" viewBox="0 0 16 16"><circle cx="8" cy="8" r="7.1" fill="none" stroke="#343741" stroke-width="1.3"/><path d="M5.9 6.2 a2.1 2.1 0 1 1 3.1 1.8 c-0.7 0.35 -1 0.75 -1 1.5" fill="none" stroke="#343741" stroke-width="1.3"/><circle cx="8" cy="11.6" r="0.85" fill="#343741"/></svg>
<div class="t" style="left:1502.90px;top:424px;font-size:15.3px;color:#343741;font-weight:bold;font-family:'Liberation Sans',sans-serif;">actions</div>
<svg class="a" style="left:1562px;top:425px;" width="16" height="16" viewBox="0 0 16 16"><circle cx="8" cy="8" r="7.1" fill="none" stroke="#343741" stroke-width="1.3"/><path d="M5.9 6.2 a2.1 2.1 0 1 1 3.1 1.8 c-0.7 0.35 -1 0.75 -1 1.5" fill="none" stroke="#343741" stroke-width="1.3"/><circle cx="8" cy="11.6" r="0.85" fill="#343741"/></svg>
<svg class="a" style="left:1594px;top:415px;" width="10" height="6" viewBox="0 0 10 6"><path d="M1 5 L5 1 L9 5 Z" fill="#c2c7cf"/></svg>
<div class="a" style="left:376px;top:457px;width:1216px;height:1px;background:#d3dae6"></div>
<div class="a" style="left:376px;top:458px;width:1216px;height:4px;background:#f5f7fa"></div>
<div class="a" style="left:376px;top:462px;width:1216px;height:1px;background:#d3dae6"></div>
<div class="a" style="left:376px;top:502px;width:1216px;height:1px;background:#d3dae6"></div>
<div class="a" style="left:382px;top:472px;width:20px;height:20px;background:#fff;border:1px solid #98a2b3;border-radius:4px"></div>
<div class="t" style="left:416.30px;top:477px;font-size:16.3px;color:#474b55;font-weight:normal;font-family:'Liberation Mono',monospace;transform:scaleX(0.922);transform-origin:0 0;">Feb 20, 2024 @ 10:53:40.522</div>
<div class="a" style="left:681px;top:470px;width:121px;height:24px;background:#fff;border:1px solid #d3dae6;border-radius:4px"></div>
<svg class="a" style="left:695px;top:473px;" width="14" height="15" viewBox="0 0 14 15"><path d="M7 1 L12.8 4.3 V10.9 L7 14.2 L1.2 10.9 V4.3 Z" fill="none" stroke="#aab2c0" stroke-width="1.05" stroke-linejoin="round"/></svg>
<div class="t" style="left:717.40px;top:473px;font-size:16.4px;color:#1a1c21;font-weight:normal;font-family:'Liberation Sans',sans-serif;">filebeat</div>
<svg class="a" style="left:778px;top:478.5px;" width="11.5" height="6" viewBox="0 0 11.5 6"><path d="M0.8 0.8 L5.75 5.2 L10.7 0.8" fill="none" stroke="#1a1c21" stroke-width="1.6" stroke-linecap="round" stroke-linejoin="round"/></svg>
<div class="a" style="left:807px;top:470px;width:263px;height:24px;overflow:hidden"><div class="a" style="left:0;top:0;width:300px;height:24px;background:#fff;border:1px solid #d3dae6;border-radius:4px"></div></div>
<div class="a" style="left:807px;top:462px;width:263px;height:40px;overflow:hidden">
<div class="t" style="left:11.30px;top:12px;font-size:16.55px;color:#1a1c21;font-weight:normal;font-family:'Liberation Sans',sans-serif;">gke-serverless-produ-serverless-pool-1234</div>
</div>
<div class="a" style="left:1081px;top:469px;width:100px;height:27px;background:#fff;border:2px solid #0077cc;border-radius:4px"></div>
<div class="t" style="left:1107.40px;top:474px;font-size:16.8px;color:#1a1c21;font-weight:normal;font-family:'Liberation Sans',sans-serif;">info</div>
<svg class="a" style="left:1141px;top:479.5px;" width="11.5" height="6" viewBox="0 0 11.5 6"><path d="M0.8 0.8 L5.75 5.2 L10.7 0.8" fill="none" stroke="#1a1c21" stroke-width="1.6" stroke-linecap="round" stroke-linejoin="round"/></svg>
<div class="t" style="left:1199.00px;top:474px;font-size:16.1px;color:#4b505b;font-weight:normal;font-family:'Liberation Sans',sans-serif;">Harvester started for paths: [/var/log/...</div>
<svg class="a" style="left:1500px;top:475px;" width="16" height="15" viewBox="0 0 16 15"><path d="M1.8 13 L13.7 1.5 M9.4 1.1 H14.2 V5.5 M1.1 8.8 V13.6 H5.7" fill="none" stroke="#3f434c" stroke-width="0.95"/></svg>
<svg class="a" style="left:1530px;top:474px;" width="17" height="17" viewBox="0 0 17 17"><path d="M1.6 3.2 V15.4 H7.6" fill="none" stroke="#343741" stroke-width="1.4"/>
<path d="M8.6 13.2 H4 V1.2 H10.5 L13.7 4.3 V8.2" fill="none" stroke="#343741" stroke-width="1.3"/>
<path d="M10.5 1.2 V4.3 H13.7 Z" fill="#343741"/>
<circle cx="11.6" cy="12.4" r="4" fill="#343741"/>
<path d="M9.8 12.5 L11.1 13.7 L13.4 11.2" fill="none" stroke="#fff" stroke-width="1.1" stroke-linecap="round" stroke-linejoin="round"/></svg>
<svg class="a" style="left:1560px;top:474px;" width="16" height="16" viewBox="0 0 16 16"><rect x="0.7" y="0.7" width="14.3" height="14.3" rx="1.8" fill="none" stroke="#98a2b3" stroke-width="1.2"/>
<path d="M2.5 3.8 H11.8 M3 6.8 H9 M5 9.5 H9 M8 12 H12.8" stroke="#98a2b3" stroke-width="1.1"/></svg>
<div class="a" style="left:376px;top:503px;width:1216px;height:39px;background:#f5f7fa"></div>
<div class="a" style="left:376px;top:542px;width:1216px;height:1px;background:#d3dae6"></div>
<div class="a" style="left:382px;top:512px;width:20px;height:20px;background:#fff;border:1px solid #98a2b3;border-radius:4px"></div>
<div class="t" style="left:416.30px;top:517px;font-size:16.3px;color:#474b55;font-weight:normal;font-family:'Liberation Mono',monospace;transform:scaleX(0.922);transform-origin:0 0;">Feb 20, 2024 @ 10:53:40.521</div>
<div class="a" style="left:681px;top:510px;width:121px;height:24px;background:#fff;border:1px solid #d3dae6;border-radius:4px"></div>
<svg class="a" style="left:695px;top:513px;" width="14" height="15" viewBox="0 0 14 15"><path d="M7 1 L12.8 4.3 V10.9 L7 14.2 L1.2 10.9 V4.3 Z" fill="none" stroke="#aab2c0" stroke-width="1.05" stroke-linejoin="round"/></svg>
<div class="t" style="left:717.40px;top:513px;font-size:16.4px;color:#1a1c21;font-weight:normal;font-family:'Liberation Sans',sans-serif;">filebeat</div>
<svg class="a" style="left:778px;top:518.5px;" width="11.5" height="6" viewBox="0 0 11.5 6"><path d="M0.8 0.8 L5.75 5.2 L10.7 0.8" fill="none" stroke="#1a1c21" stroke-width="1.6" stroke-linecap="round" stroke-linejoin="round"/></svg>
<div class="a" style="left:807px;top:510px;width:263px;height:24px;overflow:hidden"><div class="a" style="left:0;top:0;width:300px;height:24px;background:#fff;border:1px solid #d3dae6;border-radius:4px"></div></div>
<div class="a" style="left:807px;top:502px;width:263px;height:40px;overflow:hidden">
<div class="t" style="left:11.30px;top:12px;font-size:16.55px;color:#1a1c21;font-weight:normal;font-family:'Liberation Sans',sans-serif;">gke-serverless-produ-serverless-pool-1234</div>
</div>
<div class="a" style="left:1081px;top:509px;width:100px;height:27px;background:#fff;border:2px solid #0077cc;border-radius:4px"></div>
<div class="t" style="left:1107.40px;top:514px;font-size:16.8px;color:#1a1c21;font-weight:normal;font-family:'Liberation Sans',sans-serif;">info</div>
<svg class="a" style="left:1141px;top:519.5px;" width="11.5" height="6" viewBox="0 0 11.5 6"><path d="M0.8 0.8 L5.75 5.2 L10.7 0.8" fill="none" stroke="#1a1c21" stroke-width="1.6" stroke-linecap="round" stroke-linejoin="round"/></svg>
<div class="t" style="left:1199.00px;top:514px;font-size:16.1px;color:#4b505b;font-weight:normal;font-family:'Liberation Sans',sans-serif;">Configured paths: [/var/log/containers...</div>
<svg class="a" style="left:1500px;top:515px;" width="16" height="15" viewBox="0 0 16 15"><path d="M1.8 13 L13.7 1.5 M9.4 1.1 H14.2 V5.5 M1.1 8.8 V13.6 H5.7" fill="none" stroke="#3f434c" stroke-width="0.95"/></svg>
<svg class="a" style="left:1530px;top:514px;" width="17" height="17" viewBox="0 0 17 17"><path d="M1.6 3.2 V15.4 H7.6" fill="none" stroke="#343741" stroke-width="1.4"/>
<path d="M8.6 13.2 H4 V1.2 H10.5 L13.7 4.3 V8.2" fill="none" stroke="#343741" stroke-width="1.3"/>
<path d="M10.5 1.2 V4.3 H13.7 Z" fill="#343741"/>
<circle cx="11.6" cy="12.4" r="4" fill="#343741"/>
<path d="M9.8 12.5 L11.1 13.7 L13.4 11.2" fill="none" stroke="#fff" stroke-width="1.1" stroke-linecap="round" stroke-linejoin="round"/></svg>
<svg class="a" style="left:1560px;top:514px;" width="16" height="16" viewBox="0 0 16 16"><rect x="0.7" y="0.7" width="14.3" height="14.3" rx="1.8" fill="none" stroke="#98a2b3" stroke-width="1.2"/>
<path d="M2.5 3.8 H11.8 M3 6.8 H9 M5 9.5 H9 M8 12 H12.8" stroke="#98a2b3" stroke-width="1.1"/></svg>
<div class="a" style="left:376px;top:582px;width:1216px;height:1px;background:#d3dae6"></div>
<div class="a" style="left:382px;top:552px;width:20px;height:20px;background:#fff;border:1px solid #98a2b3;border-radius:4px"></div>
<div class="t" style="left:416.30px;top:557px;font-size:16.3px;color:#474b55;font-weight:normal;font-family:'Liberation Mono',monospace;transform:scaleX(0.922);transform-origin:0 0;">Feb 20, 2024 @ 10:53:40.518</div>
<div class="a" style="left:681px;top:550px;width:121px;height:24px;background:#fff;border:1px solid #d3dae6;border-radius:4px"></div>
<svg class="a" style="left:695px;top:553px;" width="14" height="15" viewBox="0 0 14 15"><path d="M7 1 L12.8 4.3 V10.9 L7 14.2 L1.2 10.9 V4.3 Z" fill="none" stroke="#aab2c0" stroke-width="1.05" stroke-linejoin="round"/></svg>
<div class="t" style="left:717.40px;top:553px;font-size:16.4px;color:#1a1c21;font-weight:normal;font-family:'Liberation Sans',sans-serif;">filebeat</div>
<svg class="a" style="left:778px;top:558.5px;" width="11.5" height="6" viewBox="0 0 11.5 6"><path d="M0.8 0.8 L5.75 5.2 L10.7 0.8" fill="none" stroke="#1a1c21" stroke-width="1.6" stroke-linecap="round" stroke-linejoin="round"/></svg>
<div class="a" style="left:807px;top:550px;width:263px;height:24px;overflow:hidden"><div class="a" style="left:0;top:0;width:300px;height:24px;background:#fff;border:1px solid #d3dae6;border-radius:4px"></div></div>
<div class="a" style="left:807px;top:542px;width:263px;height:40px;overflow:hidden">
<div class="t" style="left:11.30px;top:12px;font-size:16.55px;color:#1a1c21;font-weight:normal;font-family:'Liberation Sans',sans-serif;">gke-serverless-produ-serverless-pool-1234</div>
</div>
<div class="a" style="left:1081px;top:549px;width:100px;height:27px;background:#fff;border:2px solid #0077cc;border-radius:4px"></div>
<div class="t" style="left:1107.40px;top:554px;font-size:16.8px;color:#1a1c21;font-weight:normal;font-family:'Liberation Sans',sans-serif;">info</div>
<svg class="a" style="left:1141px;top:559.5px;" width="11.5" height="6" viewBox="0 0 11.5 6"><path d="M0.8 0.8 L5.75 5.2 L10.7 0.8" fill="none" stroke="#1a1c21" stroke-width="1.6" stroke-linecap="round" stroke-linejoin="round"/></svg>
<div class="t" style="left:1199.00px;top:554px;font-size:16.1px;color:#4b505b;font-weight:normal;font-family:'Liberation Sans',sans-serif;">Reader was closed. Closing.</div>
<svg class="a" style="left:1500px;top:555px;" width="16" height="15" viewBox="0 0 16 15"><path d="M1.8 13 L13.7 1.5 M9.4 1.1 H14.2 V5.5 M1.1 8.8 V13.6 H5.7" fill="none" stroke="#3f434c" stroke-width="0.95"/></svg>
<svg class="a" style="left:1530px;top:554px;" width="17" height="17" viewBox="0 0 17 17"><path d="M1.6 3.2 V15.4 H7.6" fill="none" stroke="#343741" stroke-width="1.4"/>
<path d="M8.6 13.2 H4 V1.2 H10.5 L13.7 4.3 V8.2" fill="none" stroke="#343741" stroke-width="1.3"/>
<path d="M10.5 1.2 V4.3 H13.7 Z" fill="#343741"/>
<circle cx="11.6" cy="12.4" r="4" fill="#343741"/>
<path d="M9.8 12.5 L11.1 13.7 L13.4 11.2" fill="none" stroke="#fff" stroke-width="1.1" stroke-linecap="round" stroke-linejoin="round"/></svg>
<svg class="a" style="left:1560px;top:554px;" width="16" height="16" viewBox="0 0 16 16"><rect x="0.7" y="0.7" width="14.3" height="14.3" rx="1.8" fill="none" stroke="#98a2b3" stroke-width="1.2"/>
<path d="M2.5 3.8 H11.8 M3 6.8 H9 M5 9.5 H9 M8 12 H12.8" stroke="#98a2b3" stroke-width="1.1"/></svg>
<div class="a" style="left:376px;top:583px;width:1216px;height:39px;background:#f5f7fa"></div>
<div class="a" style="left:376px;top:622px;width:1216px;height:1px;background:#d3dae6"></div>
<div class="a" style="left:382px;top:592px;width:20px;height:20px;background:#fff;border:1px solid #98a2b3;border-radius:4px"></div>
<div class="t" style="left:416.30px;top:597px;font-size:16.3px;color:#474b55;font-weight:normal;font-family:'Liberation Mono',monospace;transform:scaleX(0.922);transform-origin:0 0;">Feb 20, 2024 @ 10:53:40.517</div>
<div class="a" style="left:681px;top:590px;width:121px;height:24px;background:#fff;border:1px solid #d3dae6;border-radius:4px"></div>
<svg class="a" style="left:695px;top:593px;" width="14" height="15" viewBox="0 0 14 15"><path d="M7 1 L12.8 4.3 V10.9 L7 14.2 L1.2 10.9 V4.3 Z" fill="none" stroke="#aab2c0" stroke-width="1.05" stroke-linejoin="round"/></svg>
<div class="t" style="left:717.40px;top:593px;font-size:16.4px;color:#1a1c21;font-weight:normal;font-family:'Liberation Sans',sans-serif;">filebeat</div>
<svg class="a" style="left:778px;top:598.5px;" width="11.5" height="6" viewBox="0 0 11.5 6"><path d="M0.8 0.8 L5.75 5.2 L10.7 0.8" fill="none" stroke="#1a1c21" stroke-width="1.6" stroke-linecap="round" stroke-linejoin="round"/></svg>
<div class="a" style="left:807px;top:590px;width:263px;height:24px;overflow:hidden"><div class="a" style="left:0;top:0;width:300px;height:24px;background:#fff;border:1px solid #d3dae6;border-radius:4px"></div></div>
<div class="a" style="left:807px;top:582px;width:263px;height:40px;overflow:hidden">
<div class="t" style="left:11.30px;top:12px;font-size:16.55px;color:#1a1c21;font-weight:normal;font-family:'Liberation Sans',sans-serif;">gke-serverless-produ-serverless-pool-1234</div>
</div>
<div class="a" style="left:1081px;top:589px;width:100px;height:27px;background:#fff;border:2px solid #0077cc;border-radius:4px"></div>
<div class="t" style="left:1107.40px;top:594px;font-size:16.8px;color:#1a1c21;font-weight:normal;font-family:'Liberation Sans',sans-serif;">info</div>
<svg class="a" style="left:1141px;top:599.5px;" width="11.5" height="6" viewBox="0 0 11.5 6"><path d="M0.8 0.8 L5.75 5.2 L10.7 0.8" fill="none" stroke="#1a1c21" stroke-width="1.6" stroke-linecap="round" stroke-linejoin="round"/></svg>
<div class="t" style="left:1199.00px;top:594px;font-size:16.1px;color:#4b505b;font-weight:normal;font-family:'Liberation Sans',sans-serif;">input ticker stopped</div>
<svg class="a" style="left:1500px;top:595px;" width="16" height="15" viewBox="0 0 16 15"><path d="M1.8 13 L13.7 1.5 M9.4 1.1 H14.2 V5.5 M1.1 8.8 V13.6 H5.7" fill="none" stroke="#3f434c" stroke-width="0.95"/></svg>
<svg class="a" style="left:1530px;top:594px;" width="17" height="17" viewBox="0 0 17 17"><path d="M1.6 3.2 V15.4 H7.6" fill="none" stroke="#343741" stroke-width="1.4"/>
<path d="M8.6 13.2 H4 V1.2 H10.5 L13.7 4.3 V8.2" fill="none" stroke="#343741" stroke-width="1.3"/>
<path d="M10.5 1.2 V4.3 H13.7 Z" fill="#343741"/>
<circle cx="11.6" cy="12.4" r="4" fill="#343741"/>
<path d="M9.8 12.5 L11.1 13.7 L13.4 11.2" fill="none" stroke="#fff" stroke-width="1.1" stroke-linecap="round" stroke-linejoin="round"/></svg>
<svg class="a" style="left:1560px;top:594px;" width="16" height="16" viewBox="0 0 16 16"><rect x="0.7" y="0.7" width="14.3" height="14.3" rx="1.8" fill="none" stroke="#98a2b3" stroke-width="1.2"/>
<path d="M2.5 3.8 H11.8 M3 6.8 H9 M5 9.5 H9 M8 12 H12.8" stroke="#98a2b3" stroke-width="1.1"/></svg>
<div class="a" style="left:376px;top:662px;width:1216px;height:1px;background:#d3dae6"></div>
<div class="a" style="left:382px;top:632px;width:20px;height:20px;background:#fff;border:1px solid #98a2b3;border-radius:4px"></div>
<div class="t" style="left:416.30px;top:637px;font-size:16.3px;color:#474b55;font-weight:normal;font-family:'Liberation Mono',monospace;transform:scaleX(0.922);transform-origin:0 0;">Feb 20, 2024 @ 10:53:40.279</div>
<div class="a" style="left:681px;top:630px;width:121px;height:24px;background:#fff;border:1px solid #d3dae6;border-radius:4px"></div>
<svg class="a" style="left:695px;top:633px;" width="14" height="15" viewBox="0 0 14 15"><path d="M7 1 L12.8 4.3 V10.9 L7 14.2 L1.2 10.9 V4.3 Z" fill="none" stroke="#aab2c0" stroke-width="1.05" stroke-linejoin="round"/></svg>
<div class="t" style="left:717.40px;top:633px;font-size:16.4px;color:#1a1c21;font-weight:normal;font-family:'Liberation Sans',sans-serif;">filebeat</div>
<svg class="a" style="left:778px;top:638.5px;" width="11.5" height="6" viewBox="0 0 11.5 6"><path d="M0.8 0.8 L5.75 5.2 L10.7 0.8" fill="none" stroke="#1a1c21" stroke-width="1.6" stroke-linecap="round" stroke-linejoin="round"/></svg>
<div class="a" style="left:807px;top:630px;width:263px;height:24px;overflow:hidden"><div class="a" style="left:0;top:0;width:300px;height:24px;background:#fff;border:1px solid #d3dae6;border-radius:4px"></div></div>
<div class="a" style="left:807px;top:622px;width:263px;height:40px;overflow:hidden">
<div class="t" style="left:11.30px;top:12px;font-size:16.55px;color:#1a1c21;font-weight:normal;font-family:'Liberation Sans',sans-serif;">gke-serverless-produ-serverless-pool-1234</div>
</div>
<div class="a" style="left:1081px;top:629px;width:100px;height:27px;background:#fff;border:2px solid #0077cc;border-radius:4px"></div>
<div class="t" style="left:1107.40px;top:634px;font-size:16.8px;color:#1a1c21;font-weight:normal;font-family:'Liberation Sans',sans-serif;">info</div>
<svg class="a" style="left:1141px;top:639.5px;" width="11.5" height="6" viewBox="0 0 11.5 6"><path d="M0.8 0.8 L5.75 5.2 L10.7 0.8" fill="none" stroke="#1a1c21" stroke-width="1.6" stroke-linecap="round" stroke-linejoin="round"/></svg>
<div class="t" style="left:1199.00px;top:634px;font-size:16.1px;color:#4b505b;font-weight:normal;font-family:'Liberation Sans',sans-serif;">File was removed. Closing because cl...</div>
<svg class="a" style="left:1500px;top:635px;" width="16" height="15" viewBox="0 0 16 15"><path d="M1.8 13 L13.7 1.5 M9.4 1.1 H14.2 V5.5 M1.1 8.8 V13.6 H5.7" fill="none" stroke="#3f434c" stroke-width="0.95"/></svg>
<svg class="a" style="left:1530px;top:634px;" width="17" height="17" viewBox="0 0 17 17"><path d="M1.6 3.2 V15.4 H7.6" fill="none" stroke="#343741" stroke-width="1.4"/>
<path d="M8.6 13.2 H4 V1.2 H10.5 L13.7 4.3 V8.2" fill="none" stroke="#343741" stroke-width="1.3"/>
<path d="M10.5 1.2 V4.3 H13.7 Z" fill="#343741"/>
<circle cx="11.6" cy="12.4" r="4" fill="#343741"/>
<path d="M9.8 12.5 L11.1 13.7 L13.4 11.2" fill="none" stroke="#fff" stroke-width="1.1" stroke-linecap="round" stroke-linejoin="round"/></svg>
<svg class="a" style="left:1560px;top:634px;" width="16" height="16" viewBox="0 0 16 16"><rect x="0.7" y="0.7" width="14.3" height="14.3" rx="1.8" fill="none" stroke="#98a2b3" stroke-width="1.2"/>
<path d="M2.5 3.8 H11.8 M3 6.8 H9 M5 9.5 H9 M8 12 H12.8" stroke="#98a2b3" stroke-width="1.1"/></svg>
<div class="a" style="left:376px;top:663px;width:1216px;height:39px;background:#f5f7fa"></div>
<div class="a" style="left:376px;top:702px;width:1216px;height:1px;background:#d3dae6"></div>
<div class="a" style="left:382px;top:672px;width:20px;height:20px;background:#fff;border:1px solid #98a2b3;border-radius:4px"></div>
<div class="t" style="left:416.30px;top:677px;font-size:16.3px;color:#474b55;font-weight:normal;font-family:'Liberation Mono',monospace;transform:scaleX(0.922);transform-origin:0 0;">Feb 20, 2024 @ 10:53:39.480</div>
<div class="a" style="left:681px;top:670px;width:121px;height:24px;background:#fff;border:1px solid #d3dae6;border-radius:4px"></div>
<svg class="a" style="left:695px;top:673px;" width="14" height="15" viewBox="0 0 14 15"><path d="M7 1 L12.8 4.3 V10.9 L7 14.2 L1.2 10.9 V4.3 Z" fill="none" stroke="#aab2c0" stroke-width="1.05" stroke-linejoin="round"/></svg>
<div class="t" style="left:717.40px;top:673px;font-size:16.4px;color:#1a1c21;font-weight:normal;font-family:'Liberation Sans',sans-serif;">filebeat</div>
<svg class="a" style="left:778px;top:678.5px;" width="11.5" height="6" viewBox="0 0 11.5 6"><path d="M0.8 0.8 L5.75 5.2 L10.7 0.8" fill="none" stroke="#1a1c21" stroke-width="1.6" stroke-linecap="round" stroke-linejoin="round"/></svg>
<div class="a" style="left:807px;top:670px;width:263px;height:24px;overflow:hidden"><div class="a" style="left:0;top:0;width:300px;height:24px;background:#fff;border:1px solid #d3dae6;border-radius:4px"></div></div>
<div class="a" style="left:807px;top:662px;width:263px;height:40px;overflow:hidden">
<div class="t" style="left:11.30px;top:12px;font-size:16.55px;color:#1a1c21;font-weight:normal;font-family:'Liberation Sans',sans-serif;">gke-serverless-produ-serverless-pool-1234</div>
</div>
<div class="a" style="left:1081px;top:669px;width:100px;height:27px;background:#fff;border:2px solid #0077cc;border-radius:4px"></div>
<div class="t" style="left:1107.40px;top:674px;font-size:16.8px;color:#1a1c21;font-weight:normal;font-family:'Liberation Sans',sans-serif;">info</div>
<svg class="a" style="left:1141px;top:679.5px;" width="11.5" height="6" viewBox="0 0 11.5 6"><path d="M0.8 0.8 L5.75 5.2 L10.7 0.8" fill="none" stroke="#1a1c21" stroke-width="1.6" stroke-linecap="round" stroke-linejoin="round"/></svg>
<div class="t" style="left:1199.00px;top:674px;font-size:16.1px;color:#4b505b;font-weight:normal;font-family:'Liberation Sans',sans-serif;">BeatV2Manager.unitListen UnitChang...</div>
<svg class="a" style="left:1500px;top:675px;" width="16" height="15" viewBox="0 0 16 15"><path d="M1.8 13 L13.7 1.5 M9.4 1.1 H14.2 V5.5 M1.1 8.8 V13.6 H5.7" fill="none" stroke="#3f434c" stroke-width="0.95"/></svg>
<svg class="a" style="left:1530px;top:674px;" width="17" height="17" viewBox="0 0 17 17"><path d="M1.6 3.2 V15.4 H7.6" fill="none" stroke="#343741" stroke-width="1.4"/>
<path d="M8.6 13.2 H4 V1.2 H10.5 L13.7 4.3 V8.2" fill="none" stroke="#343741" stroke-width="1.3"/>
<path d="M10.5 1.2 V4.3 H13.7 Z" fill="#343741"/>
<circle cx="11.6" cy="12.4" r="4" fill="#343741"/>
<path d="M9.8 12.5 L11.1 13.7 L13.4 11.2" fill="none" stroke="#fff" stroke-width="1.1" stroke-linecap="round" stroke-linejoin="round"/></svg>
<svg class="a" style="left:1560px;top:674px;" width="16" height="16" viewBox="0 0 16 16"><rect x="0.7" y="0.7" width="14.3" height="14.3" rx="1.8" fill="none" stroke="#98a2b3" stroke-width="1.2"/>
<path d="M2.5 3.8 H11.8 M3 6.8 H9 M5 9.5 H9 M8 12 H12.8" stroke="#98a2b3" stroke-width="1.1"/></svg>
<div class="a" style="left:376px;top:742px;width:1216px;height:1px;background:#d3dae6"></div>
<div class="a" style="left:382px;top:712px;width:20px;height:20px;background:#fff;border:1px solid #98a2b3;border-radius:4px"></div>
<div class="t" style="left:416.30px;top:717px;font-size:16.3px;color:#474b55;font-weight:normal;font-family:'Liberation Mono',monospace;transform:scaleX(0.922);transform-origin:0 0;">Feb 20, 2024 @ 10:53:39.364</div>
<div class="a" style="left:681px;top:710px;width:121px;height:24px;background:#fff;border:1px solid #d3dae6;border-radius:4px"></div>
<svg class="a" style="left:695px;top:713px;" width="14" height="15" viewBox="0 0 14 15"><path d="M7 1 L12.8 4.3 V10.9 L7 14.2 L1.2 10.9 V4.3 Z" fill="none" stroke="#aab2c0" stroke-width="1.05" stroke-linejoin="round"/></svg>
<div class="t" style="left:717.40px;top:713px;font-size:16.4px;color:#1a1c21;font-weight:normal;font-family:'Liberation Sans',sans-serif;">filebeat</div>
<svg class="a" style="left:778px;top:718.5px;" width="11.5" height="6" viewBox="0 0 11.5 6"><path d="M0.8 0.8 L5.75 5.2 L10.7 0.8" fill="none" stroke="#1a1c21" stroke-width="1.6" stroke-linecap="round" stroke-linejoin="round"/></svg>
<div class="a" style="left:807px;top:710px;width:263px;height:24px;overflow:hidden"><div class="a" style="left:0;top:0;width:300px;height:24px;background:#fff;border:1px solid #d3dae6;border-radius:4px"></div></div>
<div class="a" style="left:807px;top:702px;width:263px;height:40px;overflow:hidden">
<div class="t" style="left:11.30px;top:12px;font-size:16.55px;color:#1a1c21;font-weight:normal;font-family:'Liberation Sans',sans-serif;">gke-serverless-produ-serverless-pool-1234</div>
</div>
<div class="a" style="left:1081px;top:709px;width:100px;height:27px;background:#fff;border:2px solid #f5c11b;border-radius:4px"></div>
<div class="t" style="left:1102.50px;top:714px;font-size:16.8px;color:#1a1c21;font-weight:normal;font-family:'Liberation Sans',sans-serif;">warn</div>
<svg class="a" style="left:1145px;top:719.5px;" width="11.5" height="6" viewBox="0 0 11.5 6"><path d="M0.8 0.8 L5.75 5.2 L10.7 0.8" fill="none" stroke="#1a1c21" stroke-width="1.6" stroke-linecap="round" stroke-linejoin="round"/></svg>
<div class="t" style="left:1199.00px;top:714px;font-size:16.1px;color:#4b505b;font-weight:normal;font-family:'Liberation Sans',sans-serif;">Cannot index event (status=400): dro...</div>
<svg class="a" style="left:1500px;top:715px;" width="16" height="15" viewBox="0 0 16 15"><path d="M1.8 13 L13.7 1.5 M9.4 1.1 H14.2 V5.5 M1.1 8.8 V13.6 H5.7" fill="none" stroke="#3f434c" stroke-width="0.95"/></svg>
<svg class="a" style="left:1530px;top:714px;" width="17" height="17" viewBox="0 0 17 17"><path d="M1.6 3.2 V15.4 H7.6" fill="none" stroke="#343741" stroke-width="1.4"/>
<path d="M8.6 13.2 H4 V1.2 H10.5 L13.7 4.3 V8.2" fill="none" stroke="#343741" stroke-width="1.3"/>
<path d="M10.5 1.2 V4.3 H13.7 Z" fill="#343741"/>
<circle cx="11.6" cy="12.4" r="4" fill="#343741"/>
<path d="M9.8 12.5 L11.1 13.7 L13.4 11.2" fill="none" stroke="#fff" stroke-width="1.1" stroke-linecap="round" stroke-linejoin="round"/></svg>
<svg class="a" style="left:1560px;top:714px;" width="16" height="16" viewBox="0 0 16 16"><rect x="0.7" y="0.7" width="14.3" height="14.3" rx="1.8" fill="none" stroke="#98a2b3" stroke-width="1.2"/>
<path d="M2.5 3.8 H11.8 M3 6.8 H9 M5 9.5 H9 M8 12 H12.8" stroke="#98a2b3" stroke-width="1.1"/></svg>
<div class="a" style="left:376px;top:743px;width:1216px;height:39px;background:#f5f7fa"></div>
<div class="a" style="left:376px;top:782px;width:1216px;height:1px;background:#d3dae6"></div>
<div class="a" style="left:382px;top:752px;width:20px;height:20px;background:#fff;border:1px solid #98a2b3;border-radius:4px"></div>
<div class="t" style="left:416.30px;top:757px;font-size:16.3px;color:#474b55;font-weight:normal;font-family:'Liberation Mono',monospace;transform:scaleX(0.922);transform-origin:0 0;">Feb 20, 2024 @ 10:53:39.364</div>
<div class="a" style="left:681px;top:750px;width:121px;height:24px;background:#fff;border:1px solid #d3dae6;border-radius:4px"></div>
<svg class="a" style="left:695px;top:753px;" width="14" height="15" viewBox="0 0 14 15"><path d="M7 1 L12.8 4.3 V10.9 L7 14.2 L1.2 10.9 V4.3 Z" fill="none" stroke="#aab2c0" stroke-width="1.05" stroke-linejoin="round"/></svg>
<div class="t" style="left:717.40px;top:753px;font-size:16.4px;color:#1a1c21;font-weight:normal;font-family:'Liberation Sans',sans-serif;">filebeat</div>
<svg class="a" style="left:778px;top:758.5px;" width="11.5" height="6" viewBox="0 0 11.5 6"><path d="M0.8 0.8 L5.75 5.2 L10.7 0.8" fill="none" stroke="#1a1c21" stroke-width="1.6" stroke-linecap="round" stroke-linejoin="round"/></svg>
<div class="a" style="left:807px;top:750px;width:263px;height:24px;overflow:hidden"><div class="a" style="left:0;top:0;width:300px;height:24px;background:#fff;border:1px solid #d3dae6;border-radius:4px"></div></div>
<div class="a" style="left:807px;top:742px;width:263px;height:40px;overflow:hidden">
<div class="t" style="left:11.30px;top:12px;font-size:16.55px;color:#1a1c21;font-weight:normal;font-family:'Liberation Sans',sans-serif;">gke-serverless-produ-serverless-pool-1234</div>
</div>
<div class="a" style="left:1081px;top:749px;width:100px;height:27px;background:#fff;border:2px solid #f5c11b;border-radius:4px"></div>
<div class="t" style="left:1102.50px;top:754px;font-size:16.8px;color:#1a1c21;font-weight:normal;font-family:'Liberation Sans',sans-serif;">warn</div>
<svg class="a" style="left:1145px;top:759.5px;" width="11.5" height="6" viewBox="0 0 11.5 6"><path d="M0.8 0.8 L5.75 5.2 L10.7 0.8" fill="none" stroke="#1a1c21" stroke-width="1.6" stroke-linecap="round" stroke-linejoin="round"/></svg>
<div class="t" style="left:1199.00px;top:754px;font-size:16.1px;color:#4b505b;font-weight:normal;font-family:'Liberation Sans',sans-serif;">Cannot index event (status=400): dro...</div>
<svg class="a" style="left:1500px;top:755px;" width="16" height="15" viewBox="0 0 16 15"><path d="M1.8 13 L13.7 1.5 M9.4 1.1 H14.2 V5.5 M1.1 8.8 V13.6 H5.7" fill="none" stroke="#3f434c" stroke-width="0.95"/></svg>
<svg class="a" style="left:1530px;top:754px;" width="17" height="17" viewBox="0 0 17 17"><path d="M1.6 3.2 V15.4 H7.6" fill="none" stroke="#343741" stroke-width="1.4"/>
<path d="M8.6 13.2 H4 V1.2 H10.5 L13.7 4.3 V8.2" fill="none" stroke="#343741" stroke-width="1.3"/>
<path d="M10.5 1.2 V4.3 H13.7 Z" fill="#343741"/>
<circle cx="11.6" cy="12.4" r="4" fill="#343741"/>
<path d="M9.8 12.5 L11.1 13.7 L13.4 11.2" fill="none" stroke="#fff" stroke-width="1.1" stroke-linecap="round" stroke-linejoin="round"/></svg>
<svg class="a" style="left:1560px;top:754px;" width="16" height="16" viewBox="0 0 16 16"><rect x="0.7" y="0.7" width="14.3" height="14.3" rx="1.8" fill="none" stroke="#98a2b3" stroke-width="1.2"/>
<path d="M2.5 3.8 H11.8 M3 6.8 H9 M5 9.5 H9 M8 12 H12.8" stroke="#98a2b3" stroke-width="1.1"/></svg>
<div class="a" style="left:376px;top:822px;width:1216px;height:1px;background:#d3dae6"></div>
<div class="a" style="left:382px;top:792px;width:20px;height:20px;background:#fff;border:1px solid #98a2b3;border-radius:4px"></div>
<div class="t" style="left:416.30px;top:797px;font-size:16.3px;color:#474b55;font-weight:normal;font-family:'Liberation Mono',monospace;transform:scaleX(0.922);transform-origin:0 0;">Feb 20, 2024 @ 10:53:39.364</div>
<div class="a" style="left:681px;top:790px;width:121px;height:24px;background:#fff;border:1px solid #d3dae6;border-radius:4px"></div>
<svg class="a" style="left:695px;top:793px;" width="14" height="15" viewBox="0 0 14 15"><path d="M7 1 L12.8 4.3 V10.9 L7 14.2 L1.2 10.9 V4.3 Z" fill="none" stroke="#aab2c0" stroke-width="1.05" stroke-linejoin="round"/></svg>
<div class="t" style="left:717.40px;top:793px;font-size:16.4px;color:#1a1c21;font-weight:normal;font-family:'Liberation Sans',sans-serif;">filebeat</div>
<svg class="a" style="left:778px;top:798.5px;" width="11.5" height="6" viewBox="0 0 11.5 6"><path d="M0.8 0.8 L5.75 5.2 L10.7 0.8" fill="none" stroke="#1a1c21" stroke-width="1.6" stroke-linecap="round" stroke-linejoin="round"/></svg>
<div class="a" style="left:807px;top:790px;width:263px;height:24px;overflow:hidden"><div class="a" style="left:0;top:0;width:300px;height:24px;background:#fff;border:1px solid #d3dae6;border-radius:4px"></div></div>
<div class="a" style="left:807px;top:782px;width:263px;height:40px;overflow:hidden">
<div class="t" style="left:11.30px;top:12px;font-size:16.55px;color:#1a1c21;font-weight:normal;font-family:'Liberation Sans',sans-serif;">gke-serverless-produ-serverless-pool-1234</div>
</div>
<div class="a" style="left:1081px;top:789px;width:100px;height:27px;background:#fff;border:2px solid #f5c11b;border-radius:4px"></div>
<div class="t" style="left:1102.50px;top:794px;font-size:16.8px;color:#1a1c21;font-weight:normal;font-family:'Liberation Sans',sans-serif;">warn</div>
<svg class="a" style="left:1145px;top:799.5px;" width="11.5" height="6" viewBox="0 0 11.5 6"><path d="M0.8 0.8 L5.75 5.2 L10.7 0.8" fill="none" stroke="#1a1c21" stroke-width="1.6" stroke-linecap="round" stroke-linejoin="round"/></svg>
<div class="t" style="left:1199.00px;top:794px;font-size:16.1px;color:#4b505b;font-weight:normal;font-family:'Liberation Sans',sans-serif;">Cannot index event (status=400): dro...</div>
<svg class="a" style="left:1500px;top:795px;" width="16" height="15" viewBox="0 0 16 15"><path d="M1.8 13 L13.7 1.5 M9.4 1.1 H14.2 V5.5 M1.1 8.8 V13.6 H5.7" fill="none" stroke="#3f434c" stroke-width="0.95"/></svg>
<svg class="a" style="left:1530px;top:794px;" width="17" height="17" viewBox="0 0 17 17"><path d="M1.6 3.2 V15.4 H7.6" fill="none" stroke="#343741" stroke-width="1.4"/>
<path d="M8.6 13.2 H4 V1.2 H10.5 L13.7 4.3 V8.2" fill="none" stroke="#343741" stroke-width="1.3"/>
<path d="M10.5 1.2 V4.3 H13.7 Z" fill="#343741"/>
<circle cx="11.6" cy="12.4" r="4" fill="#343741"/>
<path d="M9.8 12.5 L11.1 13.7 L13.4 11.2" fill="none" stroke="#fff" stroke-width="1.1" stroke-linecap="round" stroke-linejoin="round"/></svg>
<svg class="a" style="left:1560px;top:794px;" width="16" height="16" viewBox="0 0 16 16"><rect x="0.7" y="0.7" width="14.3" height="14.3" rx="1.8" fill="none" stroke="#98a2b3" stroke-width="1.2"/>
<path d="M2.5 3.8 H11.8 M3 6.8 H9 M5 9.5 H9 M8 12 H12.8" stroke="#98a2b3" stroke-width="1.1"/></svg>
<div class="a" style="left:405px;top:462px;width:1px;height:1px;background:#f9fafc"></div>
<div class="a" style="left:670px;top:462px;width:1px;height:1px;background:#f9fafc"></div>
<div class="a" style="left:1070px;top:462px;width:1px;height:1px;background:#f9fafc"></div>
<div class="a" style="left:1491px;top:462px;width:1px;height:1px;background:#f9fafc"></div>
<div class="a" style="left:405px;top:502px;width:1px;height:1px;background:#f9fafc"></div>
<div class="a" style="left:670px;top:502px;width:1px;height:1px;background:#f9fafc"></div>
<div class="a" style="left:1070px;top:502px;width:1px;height:1px;background:#f9fafc"></div>
<div class="a" style="left:1491px;top:502px;width:1px;height:1px;background:#f9fafc"></div>
<div class="a" style="left:405px;top:542px;width:1px;height:1px;background:#f9fafc"></div>
<div class="a" style="left:670px;top:542px;width:1px;height:1px;background:#f9fafc"></div>
<div class="a" style="left:1070px;top:542px;width:1px;height:1px;background:#f9fafc"></div>
<div class="a" style="left:1491px;top:542px;width:1px;height:1px;background:#f9fafc"></div>
<div class="a" style="left:405px;top:582px;width:1px;height:1px;background:#f9fafc"></div>
<div class="a" style="left:670px;top:582px;width:1px;height:1px;background:#f9fafc"></div>
<div class="a" style="left:1070px;top:582px;width:1px;height:1px;background:#f9fafc"></div>
<div class="a" style="left:1491px;top:582px;width:1px;height:1px;background:#f9fafc"></div>
<div class="a" style="left:405px;top:622px;width:1px;height:1px;background:#f9fafc"></div>
<div class="a" style="left:670px;top:622px;width:1px;height:1px;background:#f9fafc"></div>
<div class="a" style="left:1070px;top:622px;width:1px;height:1px;background:#f9fafc"></div>
<div class="a" style="left:1491px;top:622px;width:1px;height:1px;background:#f9fafc"></div>
<div class="a" style="left:405px;top:662px;width:1px;height:1px;background:#f9fafc"></div>
<div class="a" style="left:670px;top:662px;width:1px;height:1px;background:#f9fafc"></div>
<div class="a" style="left:1070px;top:662px;width:1px;height:1px;background:#f9fafc"></div>
<div class="a" style="left:1491px;top:662px;width:1px;height:1px;background:#f9fafc"></div>
<div class="a" style="left:405px;top:702px;width:1px;height:1px;background:#f9fafc"></div>
<div class="a" style="left:670px;top:702px;width:1px;height:1px;background:#f9fafc"></div>
<div class="a" style="left:1070px;top:702px;width:1px;height:1px;background:#f9fafc"></div>
<div class="a" style="left:1491px;top:702px;width:1px;height:1px;background:#f9fafc"></div>
<div class="a" style="left:405px;top:742px;width:1px;height:1px;background:#f9fafc"></div>
<div class="a" style="left:670px;top:742px;width:1px;height:1px;background:#f9fafc"></div>
<div class="a" style="left:1070px;top:742px;width:1px;height:1px;background:#f9fafc"></div>
<div class="a" style="left:1491px;top:742px;width:1px;height:1px;background:#f9fafc"></div>
<div class="a" style="left:405px;top:782px;width:1px;height:1px;background:#f9fafc"></div>
<div class="a" style="left:670px;top:782px;width:1px;height:1px;background:#f9fafc"></div>
<div class="a" style="left:1070px;top:782px;width:1px;height:1px;background:#f9fafc"></div>
<div class="a" style="left:1491px;top:782px;width:1px;height:1px;background:#f9fafc"></div>
<div class="a" style="left:405px;top:822px;width:1px;height:1px;background:#f9fafc"></div>
<div class="a" style="left:670px;top:822px;width:1px;height:1px;background:#f9fafc"></div>
<div class="a" style="left:1070px;top:822px;width:1px;height:1px;background:#f9fafc"></div>
<div class="a" style="left:1491px;top:822px;width:1px;height:1px;background:#f9fafc"></div>
<div class="a" style="left:1594px;top:471px;width:10px;height:40px;background:#b0b5be"></div>
<svg class="a" style="left:1594px;top:818px;" width="10" height="6" viewBox="0 0 10 6"><path d="M1 1 L5 5 L9 1 Z" fill="#c2c7cf"/></svg>
<div class="a" style="left:376px;top:828px;width:1230px;height:1px;background:#d3dae6"></div>
<div class="t" style="left:386.50px;top:846px;font-size:15.75px;color:#343741;font-weight:normal;font-family:'Liberation Sans',sans-serif;">Rows per page: 100</div>
<svg class="a" style="left:538.5px;top:850.5px;" width="12" height="6.5" viewBox="0 0 12 6.5"><path d="M0.8 0.8 L6.0 5.7 L11.2 0.8" fill="none" stroke="#343741" stroke-width="1.6" stroke-linecap="round" stroke-linejoin="round"/></svg>
<svg class="a" style="left:1403px;top:846px;" width="10" height="16" viewBox="0 0 10 16"><path d="M8.5 1 L1.7 8 L8.5 15" fill="none" stroke="#a2abba" stroke-width="1.5" stroke-linejoin="round"/></svg>
<div class="t" style="left:1432.20px;top:846px;font-size:17.2px;color:#0077cc;font-weight:bold;font-family:'Liberation Sans',sans-serif;">1</div>
<div class="a" style="left:1433px;top:860.5px;width:9.5px;height:1.6px;background:#0077cc"></div>
<div class="t" style="left:1462.30px;top:846px;font-size:17.2px;color:#343741;font-weight:normal;font-family:'Liberation Sans',sans-serif;">2</div>
<div class="t" style="left:1493.40px;top:846px;font-size:17.2px;color:#343741;font-weight:normal;font-family:'Liberation Sans',sans-serif;">3</div>
<div class="t" style="left:1524.60px;top:846px;font-size:17.2px;color:#343741;font-weight:normal;font-family:'Liberation Sans',sans-serif;">4</div>
<div class="t" style="left:1556.20px;top:846px;font-size:17.2px;color:#343741;font-weight:normal;font-family:'Liberation Sans',sans-serif;">5</div>
<svg class="a" style="left:1586px;top:846px;" width="10" height="16" viewBox="0 0 10 16"><path d="M1.5 1 L8.3 8 L1.5 15" fill="none" stroke="#343741" stroke-width="1.5" stroke-linejoin="round"/></svg>
</body></html>
